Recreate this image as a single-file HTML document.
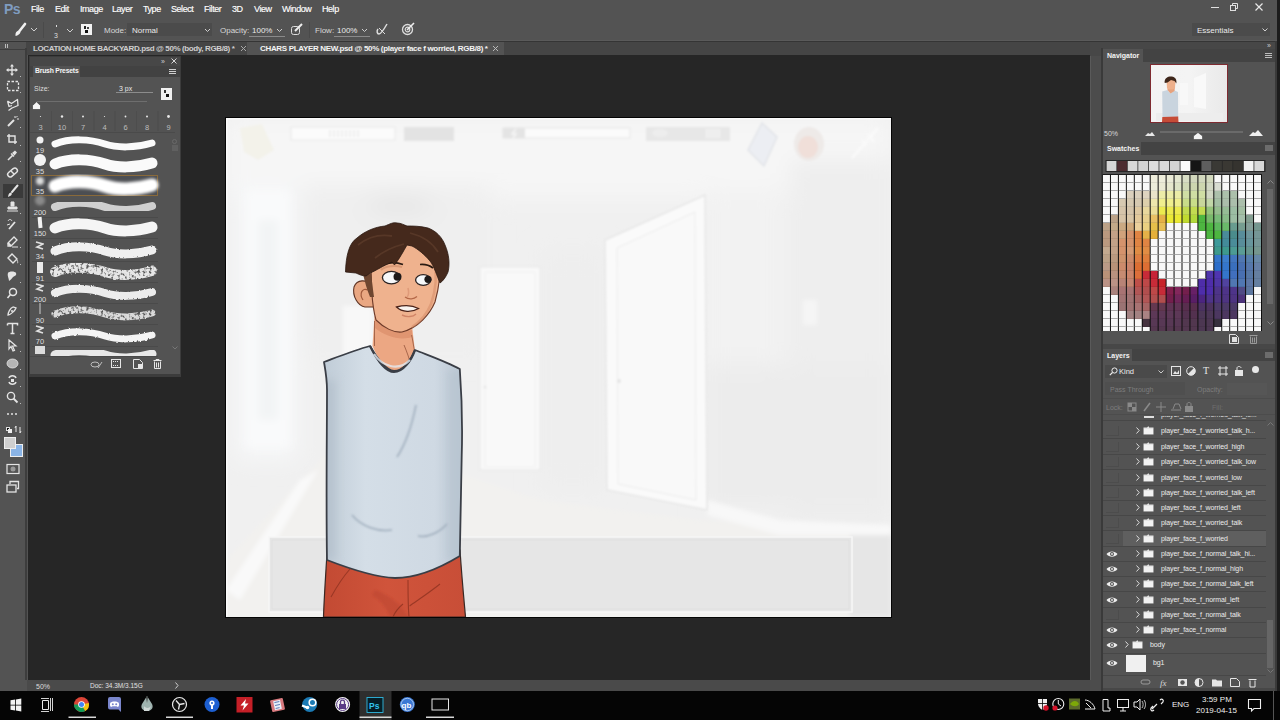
<!DOCTYPE html>
<html><head><meta charset="utf-8">
<style>
*{box-sizing:border-box}
html,body{margin:0;padding:0}
body{width:1280px;height:720px;overflow:hidden;position:relative;background:#535353;font-family:"Liberation Sans",sans-serif;color:#e6e6e6}
.a{position:absolute}
.t{position:absolute;white-space:nowrap;line-height:1}
</style></head><body>
<!-- menu bar -->
<div class="a" style="left:0;top:0;width:1280px;height:18px;background:#535353"></div>
<div class="t" style="left:4px;top:2px;font-size:14px;color:#7f9cc0;font-weight:bold;letter-spacing:-0.5px">Ps</div>
<div class="t" style="left:31px;top:5px;font-size:9px;color:#ffffff;letter-spacing:-0.45px;-webkit-text-stroke:0.15px #fff">File</div>
<div class="t" style="left:55px;top:5px;font-size:9px;color:#ffffff;letter-spacing:-0.45px;-webkit-text-stroke:0.15px #fff">Edit</div>
<div class="t" style="left:80px;top:5px;font-size:9px;color:#ffffff;letter-spacing:-0.45px;-webkit-text-stroke:0.15px #fff">Image</div>
<div class="t" style="left:112px;top:5px;font-size:9px;color:#ffffff;letter-spacing:-0.45px;-webkit-text-stroke:0.15px #fff">Layer</div>
<div class="t" style="left:143px;top:5px;font-size:9px;color:#ffffff;letter-spacing:-0.45px;-webkit-text-stroke:0.15px #fff">Type</div>
<div class="t" style="left:171px;top:5px;font-size:9px;color:#ffffff;letter-spacing:-0.45px;-webkit-text-stroke:0.15px #fff">Select</div>
<div class="t" style="left:204px;top:5px;font-size:9px;color:#ffffff;letter-spacing:-0.45px;-webkit-text-stroke:0.15px #fff">Filter</div>
<div class="t" style="left:232px;top:5px;font-size:9px;color:#ffffff;letter-spacing:-0.45px;-webkit-text-stroke:0.15px #fff">3D</div>
<div class="t" style="left:254px;top:5px;font-size:9px;color:#ffffff;letter-spacing:-0.45px;-webkit-text-stroke:0.15px #fff">View</div>
<div class="t" style="left:282px;top:5px;font-size:9px;color:#ffffff;letter-spacing:-0.45px;-webkit-text-stroke:0.15px #fff">Window</div>
<div class="t" style="left:322px;top:5px;font-size:9px;color:#ffffff;letter-spacing:-0.45px;-webkit-text-stroke:0.15px #fff">Help</div>
<!-- window controls -->
<div class="a" style="left:1211px;top:7px;width:8px;height:1px;background:#e0e0e0"></div>
<svg class="a" style="left:1229px;top:2px" width="10" height="10"><rect x="1.5" y="3.5" width="5" height="5" fill="none" stroke="#e0e0e0"/><path d="M3.5 3.5V1.5H8.5V6.5H6.5" fill="none" stroke="#e0e0e0"/></svg>
<svg class="a" style="left:1254px;top:2px" width="10" height="10"><path d="M1.5 1.5L8.5 8.5M8.5 1.5L1.5 8.5" stroke="#e8e8e8" stroke-width="1.2"/></svg>

<!-- options bar -->
<div class="a" style="left:0;top:18px;width:1280px;height:22px;background:#535353"></div>
<div class="a" style="left:0;top:40px;width:1280px;height:1px;background:#5a5a5a"></div><div class="a" style="left:0;top:41px;width:1280px;height:1px;background:#353535"></div>
<svg class="a" style="left:13px;top:22px" width="14" height="16"><path d="M12 2L6.5 9" stroke="#f0f0f0" stroke-width="2.6" stroke-linecap="round"/><path d="M5.5 8.5C3.5 9 2 11 2.5 14C5 13.5 7 12 7.5 10Z" fill="#f0f0f0"/></svg>
<svg class="a" style="left:30px;top:27px" width="8" height="5"><path d="M1 1L4 4L7 1" fill="none" stroke="#cfcfcf"/></svg>
<div class="a" style="left:43px;top:22px;width:1px;height:16px;background:#4a4a4a"></div>
<div class="a" style="left:56px;top:25px;width:1px;height:2px;background:#ddd"></div>
<div class="t" style="left:54px;top:32px;font-size:7px;color:#ddd">3</div>
<svg class="a" style="left:66px;top:28px" width="8" height="5"><path d="M1 1L4 4L7 1" fill="none" stroke="#cfcfcf"/></svg>
<div class="a" style="left:81px;top:24px;width:11px;height:11px;background:#f2f2f2"></div>
<div class="a" style="left:84px;top:26px;width:2px;height:3px;background:#222"></div>
<div class="a" style="left:87px;top:27px;width:2px;height:2px;background:#444"></div>
<div class="a" style="left:85px;top:30px;width:3px;height:3px;background:#111"></div>
<div class="t" style="left:104px;top:27px;font-size:8px;color:#d8d8d8">Mode:</div>
<div class="a" style="left:127px;top:23px;width:85px;height:13px;background:#4b4b4b"></div>
<div class="t" style="left:132px;top:27px;font-size:8px;color:#eaeaea">Normal</div>
<svg class="a" style="left:204px;top:28px" width="7" height="5"><path d="M1 1L3.5 3.5L6 1" fill="none" stroke="#cfcfcf"/></svg>
<div class="t" style="left:220px;top:27px;font-size:8px;color:#d8d8d8">Opacity:</div>
<div class="t" style="left:252px;top:27px;font-size:8px;color:#eaeaea">100%</div>
<div class="a" style="left:249px;top:36px;width:36px;height:1px;background:#8a8a8a"></div>
<svg class="a" style="left:276px;top:28px" width="7" height="5"><path d="M1 1L3.5 3.5L6 1" fill="none" stroke="#cfcfcf"/></svg>
<svg class="a" style="left:290px;top:22px" width="14" height="14"><rect x="1.5" y="4.5" width="8" height="8" rx="2" fill="none" stroke="#ddd"/><path d="M5 9L12 2" stroke="#eee" stroke-width="2"/></svg>
<div class="a" style="left:309px;top:22px;width:1px;height:16px;background:#4a4a4a"></div>
<div class="t" style="left:315px;top:27px;font-size:8px;color:#d8d8d8">Flow:</div>
<div class="t" style="left:337px;top:27px;font-size:8px;color:#eaeaea">100%</div>
<div class="a" style="left:334px;top:36px;width:36px;height:1px;background:#8a8a8a"></div>
<svg class="a" style="left:361px;top:28px" width="7" height="5"><path d="M1 1L3.5 3.5L6 1" fill="none" stroke="#cfcfcf"/></svg>
<svg class="a" style="left:375px;top:22px" width="14" height="14"><path d="M3 7C1.5 9 2 12 4 12C6 12 8 9 12 2" fill="none" stroke="#ddd" stroke-width="1.5"/><path d="M4 6L10 12" stroke="#ddd" stroke-width="1"/></svg>
<svg class="a" style="left:401px;top:22px" width="14" height="14"><circle cx="6.5" cy="7.5" r="5" fill="none" stroke="#ddd" stroke-width="1.3"/><circle cx="6.5" cy="7.5" r="2.3" fill="none" stroke="#ddd" stroke-width="1.2"/><path d="M6 8L13 1" stroke="#eee" stroke-width="1.6"/></svg>
<div class="a" style="left:1192px;top:23px;width:78px;height:13px;background:#4b4b4b"></div>
<div class="t" style="left:1197px;top:27px;font-size:8px;color:#eaeaea">Essentials</div>
<svg class="a" style="left:1262px;top:28px" width="6" height="4"><path d="M0.5 0.5L3 3L5.5 0.5" fill="none" stroke="#cfcfcf"/></svg>

<!-- tab bar -->
<div class="a" style="left:0;top:42px;width:1090px;height:13px;background:#454545"></div>
<div class="a" style="left:247px;top:42px;width:257px;height:13px;background:#535353"></div>
<svg class="a" style="left:240px;top:45px" width="7" height="7"><path d="M1 1L6 6M6 1L1 6" stroke="#a8a8a8"/></svg>
<svg class="a" style="left:492px;top:45px" width="7" height="7"><path d="M1 1L6 6M6 1L1 6" stroke="#b8b8b8"/></svg>
<div class="t" style="left:33px;top:45px;font-size:8px;color:#cfcfcf;font-weight:bold;letter-spacing:-0.38px">LOCATION HOME BACKYARD.psd @ 50% (body, RGB/8) *</div>
<div class="t" style="left:260px;top:45px;font-size:8px;color:#f4f4f4;font-weight:bold;letter-spacing:-0.33px">CHARS PLAYER NEW.psd @ 50% (player face f worried, RGB/8) *</div>

<!-- left toolbar -->
<div class="a" style="left:0;top:42px;width:26px;height:638px;background:#535353"></div>
<div class="a" style="left:25px;top:48px;width:2px;height:632px;background:#3d3d3d"></div>
<div class="a" style="left:5px;top:44px;width:1px;height:4px;background:#bbb"></div><div class="a" style="left:0;top:49px;width:25px;height:1px;background:#3e3e3e"></div>
<div class="a" style="left:7px;top:44px;width:1px;height:4px;background:#bbb"></div>
<div class="a" style="left:3px;top:184px;width:20px;height:14px;background:#3a3a3a"></div>
<svg class="a" style="left:6px;top:184px" width="14" height="14"><path d="M11.5 1.5L6 8" stroke="#e4e4e4" stroke-width="2" stroke-linecap="round"/><path d="M4.5 8.5C2.5 9 2.5 11 2 13L5 11.5C6 10.5 6 9.5 5.5 9Z" fill="#e4e4e4"/></svg>
<svg class="a" style="left:6px;top:64px" width="14" height="14"><path d="M6 1V11M1 6H11" stroke="#e4e4e4" stroke-width="1.3"/><path d="M6 0L4 2.5H8ZM6 12L4 9.5H8ZM0 6L2.5 4V8ZM12 6L9.5 4V8Z" fill="#e4e4e4"/></svg>
<div class="a" style="left:20px;top:76px;width:1px;height:1px;background:#bbb"></div>
<svg class="a" style="left:6px;top:80px" width="14" height="14"><rect x="1.5" y="1.5" width="11" height="9" fill="none" stroke="#e4e4e4" stroke-width="1.3" stroke-dasharray="2.5 1.5"/></svg>
<div class="a" style="left:20px;top:92px;width:1px;height:1px;background:#bbb"></div>
<svg class="a" style="left:6px;top:98px" width="14" height="14"><path d="M1.5 3L5.5 5.5L11.5 1.5L12 7.5L6 10L2.5 12.5M1.5 3L3 8.5L6 7.5" fill="none" stroke="#e4e4e4" stroke-width="1.3" stroke-linejoin="round"/></svg>
<div class="a" style="left:20px;top:110px;width:1px;height:1px;background:#bbb"></div>
<svg class="a" style="left:6px;top:115px" width="14" height="14"><path d="M2 11L8 5" stroke="#e4e4e4" stroke-width="2"/><path d="M9 1V3M11 4H13M10 2.5L11.5 1" stroke="#e4e4e4" stroke-width="1"/></svg>
<div class="a" style="left:20px;top:127px;width:1px;height:1px;background:#bbb"></div>
<svg class="a" style="left:6px;top:133px" width="14" height="14"><path d="M3 1V9H11M1 3H9V11" fill="none" stroke="#e4e4e4" stroke-width="1.4"/></svg>
<div class="a" style="left:20px;top:145px;width:1px;height:1px;background:#bbb"></div>
<svg class="a" style="left:6px;top:149px" width="14" height="14"><path d="M2 11L7 6" stroke="#e4e4e4" stroke-width="1.6"/><path d="M6 4L9 1.5L11 3.5L8.5 6.5Z" fill="#e4e4e4"/><path d="M5 4.5L8 7.5" stroke="#e4e4e4" stroke-width="1.3"/></svg>
<div class="a" style="left:20px;top:161px;width:1px;height:1px;background:#bbb"></div>
<svg class="a" style="left:6px;top:166px" width="14" height="14"><rect x="1" y="4" width="11" height="5" rx="2.5" transform="rotate(-40 6.5 6.5)" fill="none" stroke="#e4e4e4" stroke-width="1.5"/><path d="M5 5L8 8" stroke="#e4e4e4" stroke-width="1.4"/></svg>
<div class="a" style="left:20px;top:178px;width:1px;height:1px;background:#bbb"></div>
<svg class="a" style="left:6px;top:201px" width="14" height="14"><path d="M5 1H8V5H5Z M2 6H11V8H2Z M1 10H12" fill="#e4e4e4" stroke="#e4e4e4" stroke-width="1"/></svg>
<div class="a" style="left:20px;top:213px;width:1px;height:1px;background:#bbb"></div>
<svg class="a" style="left:6px;top:218px" width="14" height="14"><path d="M3 11L9 4" stroke="#e4e4e4" stroke-width="1.8"/><path d="M2 3C3 1 5 1 6 3M4 6L1 7" fill="none" stroke="#e4e4e4" stroke-width="1"/></svg>
<div class="a" style="left:20px;top:230px;width:1px;height:1px;background:#bbb"></div>
<svg class="a" style="left:6px;top:235px" width="14" height="14"><path d="M2 8L8 2L11 5L5 11H2Z" fill="none" stroke="#e4e4e4" stroke-width="1.3"/><path d="M2 8L5 11" stroke="#e4e4e4" stroke-width="2"/><path d="M6 12H12" stroke="#e4e4e4"/></svg>
<div class="a" style="left:20px;top:247px;width:1px;height:1px;background:#bbb"></div>
<svg class="a" style="left:6px;top:252px" width="14" height="14"><path d="M2 6L6 2L11 7L7 11Z" fill="none" stroke="#e4e4e4" stroke-width="1.4"/><path d="M11 8C12 10 12 11 11 11" stroke="#e4e4e4"/></svg>
<div class="a" style="left:20px;top:264px;width:1px;height:1px;background:#bbb"></div>
<svg class="a" style="left:6px;top:270px" width="14" height="14"><path d="M3 11C3 8 1 6 2 3C3 1 9 1 10 3C11 6 8 6 7 7C6 8 5 10 3 11Z" fill="#e4e4e4"/></svg>
<div class="a" style="left:20px;top:282px;width:1px;height:1px;background:#bbb"></div>
<svg class="a" style="left:6px;top:287px" width="14" height="14"><circle cx="7" cy="5" r="3.5" fill="none" stroke="#e4e4e4" stroke-width="1.5"/><path d="M4.5 7.5L1.5 11" stroke="#e4e4e4" stroke-width="1.6"/></svg>
<div class="a" style="left:20px;top:299px;width:1px;height:1px;background:#bbb"></div>
<svg class="a" style="left:6px;top:305px" width="14" height="14"><path d="M2 10C4 10 9 6 10 3L7 2C4 3 2 8 2 10Z" fill="none" stroke="#e4e4e4" stroke-width="1.3"/><circle cx="6" cy="6" r="1" fill="#e4e4e4"/></svg>
<div class="a" style="left:20px;top:317px;width:1px;height:1px;background:#bbb"></div>
<svg class="a" style="left:6px;top:322px" width="14" height="14"><path d="M1.5 1.5H11.5V3.5M1.5 1.5V3.5M6.5 1.5V11.5M4.5 11.5H8.5" fill="none" stroke="#e4e4e4" stroke-width="1.5"/></svg>
<div class="a" style="left:20px;top:334px;width:1px;height:1px;background:#bbb"></div>
<svg class="a" style="left:6px;top:339px" width="14" height="14"><path d="M3 1L10 7H6.5L8.5 11.5L7 12L5 7.5L3 10Z" fill="none" stroke="#e4e4e4" stroke-width="1.2"/></svg>
<div class="a" style="left:20px;top:351px;width:1px;height:1px;background:#bbb"></div>
<svg class="a" style="left:6px;top:357px" width="14" height="14"><ellipse cx="6.5" cy="6.5" rx="5.5" ry="4.5" fill="#b4b4b4" stroke="#e4e4e4" stroke-width="0.8"/></svg>
<div class="a" style="left:20px;top:369px;width:1px;height:1px;background:#bbb"></div>
<svg class="a" style="left:6px;top:374px" width="14" height="14"><path d="M3 4C4 1 9 1 10 4M10 8C9 11 4 11 3 8" fill="none" stroke="#e4e4e4" stroke-width="1.5"/><path d="M5 5H8V8H5Z" fill="#e4e4e4"/></svg>
<div class="a" style="left:20px;top:386px;width:1px;height:1px;background:#bbb"></div>
<svg class="a" style="left:6px;top:391px" width="14" height="14"><circle cx="5" cy="5" r="3.6" fill="none" stroke="#e4e4e4" stroke-width="1.4"/><path d="M7.5 7.5L11.5 11.5" stroke="#e4e4e4" stroke-width="1.8"/></svg>
<div class="a" style="left:20px;top:403px;width:1px;height:1px;background:#bbb"></div>
<svg class="a" style="left:6px;top:408px" width="14" height="14"><path d="M1 6H3M5 6H7M9 6H11" stroke="#e4e4e4" stroke-width="1.6"/></svg>
<div class="a" style="left:6px;top:427px;width:4px;height:4px;background:#111;border:1px solid #ddd"></div>
<div class="a" style="left:8px;top:429px;width:4px;height:4px;background:#eee"></div>
<svg class="a" style="left:14px;top:425px" width="9" height="9"><path d="M2 1V7M2 1L1 3M6 2V8M6 8L7 6" stroke="#e4e4e4" fill="none"/></svg>
<div class="a" style="left:10px;top:444px;width:13px;height:13px;background:#8ab4e6;border:1px solid #eee"></div>
<div class="a" style="left:4px;top:437px;width:12px;height:12px;background:#cfcfcf;border:1px solid #eee"></div>
<svg class="a" style="left:6px;top:463px" width="14" height="12"><rect x="1" y="1.5" width="12" height="9" fill="none" stroke="#e4e4e4" stroke-width="1.2"/><circle cx="7" cy="6" r="2.5" fill="#9a9a9a"/></svg>
<svg class="a" style="left:6px;top:480px" width="14" height="13"><rect x="1" y="5" width="9" height="7" fill="none" stroke="#e4e4e4" stroke-width="1.3"/><path d="M4 4V1.5H12.5V8.5H11" fill="none" stroke="#e4e4e4" stroke-width="1.3"/></svg>

<!-- canvas bg -->
<div class="a" style="left:28px;top:55px;width:1062px;height:625px;background:#262626"></div>

<!-- status bar -->
<div class="a" style="left:27px;top:680px;width:1063px;height:11px;background:#4a4a4a"></div>
<div class="t" style="left:36px;top:683px;font-size:7px;color:#dcdcdc">50%</div>
<div class="t" style="left:90px;top:683px;font-size:6.5px;color:#e0e0e0">Doc: 34.3M/3.15G</div>
<svg class="a" style="left:175px;top:682px" width="4" height="7"><path d="M0.5 0.5L3 3.5L0.5 6.5" fill="none" stroke="#cfcfcf"/></svg>

<!-- brush presets panel -->
<div class="a" style="left:29px;top:56px;width:152px;height:321px;background:#3c3c3c"></div>
<div class="a" style="left:30px;top:57px;width:150px;height:9px;background:#474747"></div>
<div class="t" style="left:161px;top:58px;font-size:7px;color:#cfcfcf">&#187;</div>
<svg class="a" style="left:171px;top:58px" width="6" height="6"><path d="M0.5 0.5L5.5 5.5M5.5 0.5L0.5 5.5" stroke="#d8d8d8"/></svg>
<div class="a" style="left:30px;top:66px;width:150px;height:11px;background:#424242"></div>
<div class="a" style="left:33px;top:66px;width:47px;height:11px;background:#535353"></div>
<div class="t" style="left:35px;top:68px;font-size:6.8px;color:#f4f4f4;font-weight:bold;letter-spacing:-0.2px">Brush Presets</div>
<div class="a" style="left:169px;top:69px;width:7px;height:1px;background:#cfcfcf;box-shadow:0 2px 0 #cfcfcf,0 4px 0 #cfcfcf"></div>
<div class="a" style="left:30px;top:77px;width:150px;height:297px;background:#535353"></div>
<div class="t" style="left:34px;top:85px;font-size:7px;color:#dcdcdc">Size:</div>
<div class="t" style="left:119px;top:85px;font-size:7px;color:#e8e8e8">3 px</div>
<div class="a" style="left:116px;top:92px;width:37px;height:1px;background:#8c8c8c"></div>
<div class="a" style="left:161px;top:88px;width:11px;height:12px;background:#f0f0f0"></div>
<div class="a" style="left:164px;top:90px;width:2px;height:3px;background:#333"></div><div class="a" style="left:166px;top:94px;width:3px;height:3px;background:#111"></div>
<div class="a" style="left:36px;top:101px;width:111px;height:1px;background:#6e6e6e"></div>
<svg class="a" style="left:32px;top:101px" width="9" height="9"><path d="M0.5 8.5V4.5L4.5 0.8L8.5 4.5V8.5Z" fill="#f6f6f6" stroke="#333" stroke-width="0.6"/></svg>
<svg class="a" style="left:30px;top:77px" width="150" height="297">
<circle cx="10.5" cy="39.5" r="0.6" fill="#e8e8e8"/>
<circle cx="32" cy="39.5" r="1.2" fill="#e8e8e8"/>
<line x1="21.5" y1="34" x2="21.5" y2="54" stroke="#4d4d4d"/>
<circle cx="53" cy="39.5" r="1.0" fill="#e8e8e8"/>
<line x1="42.5" y1="34" x2="42.5" y2="54" stroke="#4d4d4d"/>
<circle cx="74.5" cy="39.5" r="0.6" fill="#e8e8e8"/>
<line x1="64.0" y1="34" x2="64.0" y2="54" stroke="#4d4d4d"/>
<circle cx="95.5" cy="39.5" r="0.9" fill="#e8e8e8"/>
<line x1="85.0" y1="34" x2="85.0" y2="54" stroke="#4d4d4d"/>
<circle cx="117" cy="39.5" r="1.0" fill="#e8e8e8"/>
<line x1="106.5" y1="34" x2="106.5" y2="54" stroke="#4d4d4d"/>
<circle cx="138.5" cy="39.5" r="1.4" fill="#e8e8e8"/>
<line x1="128.0" y1="34" x2="128.0" y2="54" stroke="#4d4d4d"/>
<line x1="0" y1="55.5" x2="145" y2="55.5" stroke="#4a4a4a"/>
<defs><filter id="b1" x="-20%" y="-100%" width="140%" height="300%"><feGaussianBlur stdDeviation="1.8"/></filter><filter id="b2"><feGaussianBlur stdDeviation="0.7"/></filter><filter id="rough2" x="-10%" y="-60%" width="120%" height="220%"><feTurbulence type="fractalNoise" baseFrequency="0.45" numOctaves="2" seed="4" result="n"/><feDisplacementMap in="SourceGraphic" in2="n" scale="2.8"/></filter><filter id="rough" x="-10%" y="-60%" width="120%" height="220%"><feTurbulence type="fractalNoise" baseFrequency="0.5" numOctaves="2" seed="4" result="n"/><feDisplacementMap in="SourceGraphic" in2="n" scale="2.5" result="d"/><feTurbulence type="fractalNoise" baseFrequency="0.35" numOctaves="2" seed="9" result="n2"/><feColorMatrix in="n2" type="matrix" values="0 0 0 0 0  0 0 0 0 0  0 0 0 0 0  0 0 0 -4 3.0" result="m"/><feComposite in="d" in2="m" operator="in"/></filter><filter id="b3"><feGaussianBlur stdDeviation="0.4"/></filter></defs>
<path d="M0 1C15 -5 35 -4 50 1C62 5 80 5 97 0" transform="translate(25 66)" fill="none" stroke="#fafafa" stroke-width="7" stroke-linecap="round"/>
<text x="10" y="76.0" font-size="7.5" fill="#dedede" text-anchor="middle" font-family="Liberation Sans">19</text>
<circle cx="10" cy="63" r="3.5" fill="#f2f2f2"/>
<path d="M0 1C15 -5 35 -4 50 1C62 5 80 5 97 0" transform="translate(25 86)" fill="none" stroke="#fafafa" stroke-width="11" stroke-linecap="round"/>
<text x="10" y="97.0" font-size="7.5" fill="#dedede" text-anchor="middle" font-family="Liberation Sans">35</text>
<circle cx="10" cy="83" r="6" fill="#f2f2f2"/>
<rect x="1.5" y="98.5" width="126" height="20" fill="#4c4e52" stroke="#8a6a3a" stroke-width="1"/>
<path d="M0 1C15 -5 35 -4 50 1C62 5 80 5 97 0" transform="translate(25 108)" fill="none" stroke="#ffffff" stroke-width="13" stroke-linecap="round" filter="url(#b1)"/><path d="M0 1C15 -5 35 -4 50 1C62 5 80 5 97 0" transform="translate(25 108)" fill="none" stroke="#ffffff" stroke-width="7" stroke-linecap="round" filter="url(#b3)"/>
<text x="10" y="117.0" font-size="7.5" fill="#dedede" text-anchor="middle" font-family="Liberation Sans">35</text>
<circle cx="10" cy="104" r="4" fill="#dddddd" filter="url(#b1)"/>
<path d="M0 1C15 -5 35 -4 50 1C62 5 80 5 97 0" transform="translate(25 129)" fill="none" stroke="#cfcfcf" stroke-width="8" stroke-linecap="round" filter="url(#b2)"/>
<line x1="2" y1="140.5" x2="128" y2="140.5" stroke="#4a4a4a"/>
<text x="10" y="138.0" font-size="7.5" fill="#dedede" text-anchor="middle" font-family="Liberation Sans">200</text>
<ellipse cx="10" cy="123.5" rx="5" ry="5" fill="#8a8a8a" filter="url(#b1)"/>
<path d="M0 1C15 -5 35 -4 50 1C62 5 80 5 97 0" transform="translate(25 150)" fill="none" stroke="#f5f5f5" stroke-width="11" stroke-linecap="round"/>
<line x1="2" y1="161.5" x2="128" y2="161.5" stroke="#4a4a4a"/>
<text x="10" y="159.0" font-size="7.5" fill="#dedede" text-anchor="middle" font-family="Liberation Sans">150</text>
<rect x="8" y="140" width="4" height="11" fill="#f2f2f2" transform="rotate(-5 10 145)"/>
<path d="M0 1C15 -5 35 -4 50 1C62 5 80 5 97 0" transform="translate(25 173)" fill="none" stroke="#f0f0f0" stroke-width="9" stroke-linecap="round" filter="url(#rough2)"/>
<line x1="2" y1="184.5" x2="128" y2="184.5" stroke="#4a4a4a"/>
<text x="10" y="182.0" font-size="7.5" fill="#dedede" text-anchor="middle" font-family="Liberation Sans">34</text>
<path d="M6 165L13 167L7 170L13 172" fill="none" stroke="#e0e0e0" stroke-width="1.6" filter="url(#b3)"/>
<path d="M0 1C15 -5 35 -4 50 1C62 5 80 5 97 0" transform="translate(25 194)" fill="none" stroke="#e6e6e6" stroke-width="10" stroke-linecap="round" filter="url(#rough)"/>
<line x1="2" y1="205.5" x2="128" y2="205.5" stroke="#4a4a4a"/>
<text x="10" y="204.0" font-size="7.5" fill="#dedede" text-anchor="middle" font-family="Liberation Sans">91</text>
<rect x="7" y="185" width="6" height="11" fill="#eaeaea"/>
<path d="M0 1C15 -5 35 -4 50 1C62 5 80 5 97 0" transform="translate(25 215)" fill="none" stroke="#ececec" stroke-width="8" stroke-linecap="round" filter="url(#rough2)"/>
<line x1="2" y1="226.5" x2="128" y2="226.5" stroke="#4a4a4a"/>
<text x="10" y="225.0" font-size="7.5" fill="#dedede" text-anchor="middle" font-family="Liberation Sans">200</text>
<path d="M6 207L13 209L7 212L13 214" fill="none" stroke="#e0e0e0" stroke-width="1.6" filter="url(#b3)"/>
<path d="M0 1C15 -5 35 -4 50 1C62 5 80 5 97 0" transform="translate(25 236)" fill="none" stroke="#dadada" stroke-width="7" stroke-linecap="round" filter="url(#rough)"/>
<line x1="2" y1="247.5" x2="128" y2="247.5" stroke="#4a4a4a"/>
<text x="10" y="246.0" font-size="7.5" fill="#dedede" text-anchor="middle" font-family="Liberation Sans">90</text>
<line x1="10" y1="226" x2="10" y2="237" stroke="#cfcfcf"/>
<path d="M0 1C15 -5 35 -4 50 1C62 5 80 5 97 0" transform="translate(25 258)" fill="none" stroke="#f4f4f4" stroke-width="7" stroke-linecap="round" filter="url(#rough2)"/>
<line x1="2" y1="269.5" x2="128" y2="269.5" stroke="#4a4a4a"/>
<text x="10" y="267.0" font-size="7.5" fill="#dedede" text-anchor="middle" font-family="Liberation Sans">70</text>
<path d="M6 249L13 251L7 254L13 256" fill="none" stroke="#e0e0e0" stroke-width="1.6" filter="url(#b3)"/>
<path d="M0 1C15 -5 35 -4 50 1C62 5 80 5 97 0" transform="translate(25 277)" fill="none" stroke="#e8e8e8" stroke-width="9" stroke-linecap="round" filter="url(#b2)"/>
<rect x="5" y="269" width="10" height="8" fill="#dcdcdc"/>
<rect x="0" y="279" width="150" height="1" fill="#535353"/>
</svg>
<svg class="a" style="left:30px;top:121px" width="150" height="12"><text x="10.5" y="9" font-size="7.5" fill="#bdbdbd" text-anchor="middle" font-family="Liberation Sans">3</text><text x="32" y="9" font-size="7.5" fill="#bdbdbd" text-anchor="middle" font-family="Liberation Sans">10</text><text x="53" y="9" font-size="7.5" fill="#bdbdbd" text-anchor="middle" font-family="Liberation Sans">7</text><text x="74.5" y="9" font-size="7.5" fill="#bdbdbd" text-anchor="middle" font-family="Liberation Sans">4</text><text x="95.5" y="9" font-size="7.5" fill="#bdbdbd" text-anchor="middle" font-family="Liberation Sans">6</text><text x="117" y="9" font-size="7.5" fill="#bdbdbd" text-anchor="middle" font-family="Liberation Sans">8</text><text x="138.5" y="9" font-size="7.5" fill="#bdbdbd" text-anchor="middle" font-family="Liberation Sans">9</text></svg>
<div class="a" style="left:30px;top:357px;width:150px;height:17px;background:#535353"></div>
<div class="a" style="left:30px;top:356px;width:128px;height:1px;background:#4a4a4a"></div>
<div class="a" style="left:172px;top:139px;width:5px;height:5px;border-radius:50%;border:1px solid #6a6a6a"></div>
<div class="a" style="left:172px;top:145px;width:6px;height:6px;background:#606060"></div>
<svg class="a" style="left:172px;top:346px" width="6" height="4"><path d="M0.5 0.5L3 3L5.5 0.5" fill="none" stroke="#777"/></svg>
<svg class="a" style="left:90px;top:360px" width="13" height="9"><ellipse cx="5" cy="4.5" rx="4" ry="2.5" fill="none" stroke="#bdbdbd"/><path d="M8 8L12 2" stroke="#bdbdbd"/></svg>
<svg class="a" style="left:111px;top:359px" width="10" height="10"><rect x="0.5" y="0.5" width="9" height="8" fill="none" stroke="#e6e6e6"/><path d="M2 2.5H8M2 6.5H8" stroke="#e6e6e6" stroke-dasharray="1 1"/></svg>
<svg class="a" style="left:133px;top:359px" width="10" height="10"><path d="M0.5 0.5H6.5L9.5 3.5V9.5H0.5Z" fill="none" stroke="#e6e6e6"/><rect x="5" y="5" width="4" height="4" fill="#e6e6e6"/></svg>
<svg class="a" style="left:153px;top:359px" width="9" height="10"><path d="M0.5 1.5H8.5M3 1.5V0.5H6V1.5M1.5 2.5V9.5H7.5V2.5M3.5 3.5V8.5M5.5 3.5V8.5" fill="none" stroke="#e6e6e6"/></svg>

<!-- document -->
<div class="a" style="left:225px;top:117px;width:667px;height:501px;background:#050505"></div>
<svg class="a" style="left:226px;top:118px" width="665" height="499" viewBox="226 118 665 499">
<defs>
<filter id="bl8" x="-50%" y="-50%" width="200%" height="200%"><feGaussianBlur stdDeviation="11"/></filter>
<filter id="bl4" x="-50%" y="-50%" width="200%" height="200%"><feGaussianBlur stdDeviation="4"/></filter>
<filter id="bl2" x="-50%" y="-50%" width="200%" height="200%"><feGaussianBlur stdDeviation="2"/></filter>
<filter id="bl1" x="-20%" y="-20%" width="140%" height="140%"><feGaussianBlur stdDeviation="1"/></filter>
<linearGradient id="shirtg" x1="0" x2="1"><stop offset="0" stop-color="#c0ccd7"/><stop offset="0.3" stop-color="#d4dee7"/><stop offset="0.8" stop-color="#cfd9e3"/><stop offset="1" stop-color="#bcc8d4"/></linearGradient>
<linearGradient id="pantg" x1="0" x2="1"><stop offset="0" stop-color="#c24a33"/><stop offset="0.45" stop-color="#d0543b"/><stop offset="1" stop-color="#c84e37"/></linearGradient>
</defs>
<rect x="226" y="118" width="665" height="499" fill="#f0f0f0"/>
<!-- background hallway -->
<g filter="url(#bl8)">
<rect x="226" y="118" width="665" height="80" fill="#f6f6f6"/>
<rect x="300" y="185" width="190" height="170" fill="#efefef"/>
<ellipse cx="400" cy="205" rx="35" ry="8" fill="#e4e4e4"/>
<rect x="704" y="190" width="80" height="330" fill="#f2f2f2"/>
<rect x="790" y="160" width="101" height="370" fill="#eeeeee"/>
<rect x="705" y="365" width="186" height="145" fill="#ececec"/>
<rect x="540" y="250" width="66" height="240" fill="#eeeeee"/>
<rect x="236" y="180" width="62" height="280" fill="#f6f7f8"/>
</g><g filter="url(#bl4)"><rect x="246" y="190" width="44" height="258" fill="#f9fafb"/><rect x="258" y="220" width="20" height="200" fill="#f2f4f5"/>
</g>
<g filter="url(#bl2)">
<rect x="343" y="306" width="30" height="60" fill="#f8f8f8"/>
<rect x="803" y="300" width="14" height="25" fill="#f5f5f5"/>
<path d="M226 617L226 560L330 450L360 440L540 500L700 520L891 530L891 617Z" fill="#f2f1ef"/>
<path d="M226 590L300 480L318 470L240 600Z" fill="#f9f9f9"/>
<path d="M707 500L780 520L891 525L891 535L780 535L707 515Z" fill="#f8f8f8"/>
<rect x="850" y="535" width="41" height="82" fill="#e6e6e6"/>
</g>
<g filter="url(#bl1)">
<rect x="480" y="267" width="60" height="203" fill="#f9f9f9" stroke="#e9e9e9" stroke-width="1.2"/>
<rect x="485" y="272" width="50" height="195" fill="none" stroke="#f0f0f0" stroke-width="1"/>
<path d="M605 240L705 195L707 510L607 490Z" fill="#fafafa" stroke="#e6e6e6" stroke-width="1.4"/>
<path d="M617 248L695 212L696 500L618 484Z" fill="#f9f9f9" stroke="#ececec" stroke-width="1"/>
<circle cx="619" cy="381" r="2" fill="#e4e4e4"/>
<circle cx="485" cy="387" r="1.5" fill="#e6e6e6"/>
</g>
<!-- dialog box -->
<rect x="269" y="537" width="583" height="75" fill="#e6e6e6" stroke="#f6f6f6" stroke-width="1.5"/><rect x="272" y="540" width="577" height="69" fill="none" stroke="#dedede" stroke-width="0.8"/>
<rect x="226" y="118" width="665" height="1.5" fill="#fbfbfb"/><rect x="226" y="118" width="1.5" height="499" fill="#fbfbfb"/>
<!-- HUD -->
<g filter="url(#bl1)">
<path d="M240 128L262 124L274 150L258 160L244 152Z" fill="#f3f2ea"/>
<rect x="291" y="127" width="104" height="13" fill="#fbfbfb" stroke="#e8e8e8"/>
<path d="M330 130V137M334 130V137M338 130V137M342 130V137M346 130V137M350 130V137M354 130V137M358 130V137" stroke="#e2e2e2" stroke-width="1"/>
<rect x="404" y="127" width="50" height="14" fill="#e3e3e3"/>
<rect x="503" y="128" width="127" height="10" fill="#fbfbfb" stroke="#e6e6e6"/>
<rect x="503" y="128" width="22" height="10" fill="#e4e4e4"/>
<path d="M516 129L512 134H516L513 138" stroke="#f6f6f6" stroke-width="1.5" fill="none"/>
<rect x="646" y="127" width="84" height="14" fill="#e7e7e7"/>
<ellipse cx="660" cy="133" rx="8" ry="4" fill="#ededed"/>
<path d="M707 129V138M710 129V138M713 129V138M716 129V138M719 129V138" stroke="#fafafa" stroke-width="1.2"/>
<path d="M748 150L762 123L777 137L764 166Z" fill="#eceef3" stroke="#e2e4e8" stroke-width="1.5"/>
<ellipse cx="809" cy="144" rx="15" ry="17" fill="#eeeae8"/>
<ellipse cx="808" cy="147" rx="10" ry="11" fill="#f0dfd9"/>
<path d="M852 158L878 128M868 134L874 142M862 140L866 146" stroke="#fafafa" stroke-width="2.5"/>
</g>
<!-- character -->
<g id="char">
<!-- pants -->
<path d="M327 553L460 550C462 580 464 600 465.5 617L323.5 617C324 600 325.5 578 327 553Z" fill="url(#pantg)" stroke="#3a2824" stroke-width="1.2"/>
<g filter="url(#bl1)">
<path d="M375 590C390 595 402 605 408 617L390 617C386 607 380 600 372 595Z" fill="#b3402c" opacity="0.35"/>

</g>
<path d="M350 569C342 578 336 588 331 597M408 580C408 595 408 606 409 617M440 584C430 592 418 600 409.6 606M403 604C398 608 395 612 393 617" stroke="#8e3220" stroke-width="1.1" fill="none" opacity="0.8"/>
<!-- neck -->
<path d="M374.5 316L412 326L415 351C411 362 403 371 396 371C386 370 378 360 372.5 346Z" fill="#eca783"/>
<path d="M375 320C385 330 398 335 412 330L412 337C400 341 385 336 375 328Z" fill="#d88966" opacity="0.6"/>
<path d="M404 345C407 352 409 358 411 365M374.5 321L374.5 346M411.7 335L414.5 351" stroke="#8a4a32" stroke-width="1" fill="none" opacity="0.7"/>
<!-- shirt -->
<path d="M324 362C340 356 355 350 370 346C378 360 386 370 394 371C403 371 411 360 415 350C430 356 447 362 459.8 369C462 400 462.5 430 461.7 456C461 500 460 530 459.8 556C440 568 418 578 395 578C372 577 345 567 327 560C326 500 327 430 327 390C327 378 325 368 324 362Z" fill="url(#shirtg)"/>
<clipPath id="shclip"><path d="M324 362C340 356 355 350 370 346C378 360 386 370 394 371C403 371 411 360 415 350C430 356 447 362 459.8 369C462 400 462.5 430 461.7 456C461 500 460 530 459.8 556C440 568 418 578 395 578C372 577 345 567 327 560C326 500 327 430 327 390C327 378 325 368 324 362Z"/></clipPath>
<g clip-path="url(#shclip)">
<g filter="url(#bl4)">
<rect x="318" y="380" width="18" height="180" fill="#b4c0cc" opacity="0.8"/>
<rect x="448" y="370" width="20" height="190" fill="#b8c4d0" opacity="0.8"/>


</g>
</g>
<path d="M324 362C340 356 355 350 370 346C378 360 386 370 394 371C403 371 411 360 415 350C430 356 447 362 459.8 369C462 400 462.5 430 461.7 456C461 500 460 530 459.8 556C440 568 418 578 395 578C372 577 345 567 327 560C326 500 327 430 327 390C327 378 325 368 324 362Z" fill="none" stroke="#3a3e46" stroke-width="1.8" stroke-linejoin="round"/>
<path d="M370 346C378 362 386 372 394 372C403 372 411 361 415 350" stroke="#3a3e46" stroke-width="2.2" fill="none"/>
<path d="M374 354C382 366 398 372 410 360" stroke="#e4eaf0" stroke-width="2.2" fill="none" opacity="0.8"/>
<path d="M416 405C412 425 405 445 397 457M352 515C362 527 378 532 392 530M418 536C428 538 440 532 447 524" stroke="#9fadbc" stroke-width="1.5" fill="none" filter="url(#bl1)"/>
<!-- ear -->
<path d="M374 286C366 279 357 279 354 287C352 296 358 306 365 307L374 307Z" fill="#e9a782" stroke="#5e3424" stroke-width="1.1"/>
<path d="M368 290C362 287 359 294 363 300" stroke="#a05a3c" stroke-width="1.2" fill="none"/>
<!-- face -->
<path d="M372 255C370 280 372 306 376 320C384 328 394 333 402 332C418 328 430 314 435 302C439 288 441 272 440 255C425 242 390 240 372 255Z" fill="#efb28e" stroke="#6e3a28" stroke-width="1.1"/>
<path d="M434 260C437 274 436 290 431 304C427 314 420 322 412 327" stroke="#d68c68" stroke-width="2.5" fill="none" opacity="0.55"/>

<!-- eyes -->
<path d="M381 270C385 266 395 265 402 267" stroke="#c98866" stroke-width="2" fill="none" opacity="0.6"/>
<ellipse cx="391.4" cy="277.6" rx="9" ry="6.2" fill="#f6f8fa" stroke="#2a2222" stroke-width="1.3"/>
<circle cx="397.5" cy="276.8" r="4" fill="#1e1a1a"/>
<ellipse cx="423.2" cy="280" rx="7.6" ry="5.3" fill="#f6f8fa" stroke="#2a2222" stroke-width="1.3"/>
<circle cx="428" cy="279.3" r="3.6" fill="#1e1a1a"/>
<path d="M381 266C388 262 396 262 403 264.5M420 264.5C425 264 429 265 433 268" stroke="#2a1a12" stroke-width="1.7" fill="none"/>
<!-- nose & mouth -->
<path d="M405 297C409 300 414 299 417 296.5" stroke="#b46848" stroke-width="1.2" fill="none"/>
<path d="M408 288C409 292 409 295 407 297" stroke="#d89070" stroke-width="1.5" fill="none" opacity="0.7"/>
<path d="M396.5 307C404 305 412 305 418.6 308.5C412 312.5 402 312.5 396.5 307Z" fill="#f8f4f0" stroke="#4a2218" stroke-width="1.3"/>
<path d="M402 315C407 317.5 413 317 416 314" stroke="#d08466" stroke-width="1.4" fill="none"/>
<!-- hair -->
<path d="M363 274L371 273C372 282 373 290 374 297L370 297C367 290 365 282 363 274Z" fill="#6e4630"/>
<path d="M345.5 272C346 256 349 243 357 238C365 231 375 227 385 226C390 224 393 222 397 223C401 223 404 225 407 226C413 226 420 226 428 228C436 231 442 237 445 245C449 254 450 264 448 272C446 277 443 281 440 283C437 276 434 266 430 261C425 255 418 249 412 246L407 245C404 250 400 258 394.5 265L392 262C388 264 383 266 380 268C376 270 373 272 370 273L366 276C363 276 360 275 356 273Z" fill="#45291c" stroke="#2a1810" stroke-width="0.8"/>
<path d="M358 245C368 237 380 234 392 236M410 233C422 236 432 242 438 252M375 258C385 250 396 246 404 244" stroke="#6a4632" stroke-width="1.8" fill="none" opacity="0.5"/>
</g>
</svg>

<!-- right dock -->
<div class="a" style="left:1090px;top:42px;width:190px;height:649px;background:#474747"></div>
<div class="a" style="left:1090px;top:56px;width:11px;height:635px;background:#4c4c4c"></div><div class="a" style="left:1090px;top:56px;width:1px;height:624px;background:#5a5a5a"></div>
<div class="a" style="left:1101px;top:48px;width:2px;height:643px;background:#3a3a3a"></div>
<div class="a" style="left:1275px;top:41px;width:5px;height:650px;background:#3a3a3a"></div>
<div class="t" style="left:1267px;top:42px;font-size:7px;color:#cfcfcf">&#187;</div>
<div class="a" style="left:1103px;top:49px;width:172px;height:13px;background:#434343"></div>
<div class="a" style="left:1103px;top:49px;width:40px;height:13px;background:#535353"></div>
<div class="t" style="left:1107px;top:52px;font-size:7px;color:#f4f4f4;font-weight:bold">Navigator</div>
<div class="a" style="left:1265px;top:53px;width:7px;height:1px;background:#bdbdbd;box-shadow:0 2px 0 #bdbdbd,0 4px 0 #bdbdbd"></div>
<div class="a" style="left:1103px;top:62px;width:172px;height:80px;background:#535353"></div>
<div class="a" style="left:1150px;top:64px;width:78px;height:59px;background:#7e2a30"></div>
<svg class="a" style="left:1151px;top:65px" width="76" height="57"><defs><linearGradient id="ng" x1="0" x2="1"><stop offset="0" stop-color="#f3f3f3"/><stop offset="0.5" stop-color="#f4f4f4"/><stop offset="1" stop-color="#e9e9e9"/></linearGradient></defs>
<rect width="76" height="57" fill="url(#ng)"/>
<path d="M43 13L55 8V44L43 42Z" fill="#f9f9f9"/>
<rect x="29" y="18" width="8" height="22" fill="#f8f8f8"/>
<rect x="5" y="48" width="67" height="8" fill="#ededed"/>
<path d="M11.2 26.5L16.5 25L19.5 28.5L22.5 25L27 27L27.2 52L19 54L11.5 52Z" fill="#c9d4de"/>
<path d="M11.3 52L27.2 51.5L27.5 57L11 57Z" fill="#c64c37"/>
<path d="M16.5 20L24 21L23.5 26L19.5 28.5L16.5 25Z" fill="#e7a27d"/>
<path d="M15.5 15C15.5 12 24.5 12 24.5 16L24 23C22 25 18 25 16 23Z" fill="#eeb08c"/>
<path d="M13.7 18C13 13 17 11.5 19.5 11.5C23 11.5 26 13 25.4 18.5L23.5 16L20 15L16.5 17.5Z" fill="#3e261a"/>
</svg>
<div class="t" style="left:1104px;top:130px;font-size:7px;color:#d8d8d8">50%</div>
<svg class="a" style="left:1145px;top:131px" width="10" height="6"><path d="M0 5L3 2L5 3L7 1L10 5Z" fill="#e8e8e8"/></svg>
<div class="a" style="left:1160px;top:131px;width:83px;height:2px;background:#6a6a6a"></div>
<svg class="a" style="left:1193px;top:132px" width="10" height="8"><path d="M0.5 7.5V4L5 0.5L9.5 4V7.5Z" fill="#f4f4f4" stroke="#333" stroke-width="0.5"/></svg>
<svg class="a" style="left:1249px;top:129px" width="14" height="8"><path d="M0 7L4 3L6 4L9 1L14 7Z" fill="#eeeeee"/></svg>
<div class="a" style="left:1103px;top:142px;width:172px;height:13px;background:#434343"></div>
<div class="a" style="left:1103px;top:142px;width:38px;height:13px;background:#535353"></div>
<div class="t" style="left:1107px;top:145px;font-size:7px;color:#f4f4f4;font-weight:bold">Swatches</div>
<div class="a" style="left:1265px;top:145px;width:8px;height:6px;background:#6c6c6c"></div>
<div class="a" style="left:1103px;top:155px;width:172px;height:189px;background:#535353"></div>
<svg class="a" style="left:1100px;top:158px" width="175" height="180"><rect x="5.5" y="2" width="160" height="12" fill="#262626"/>
<rect x="6.60" y="3" width="9.8" height="10" fill="#d6d6d6"/>
<rect x="17.15" y="3" width="9.8" height="10" fill="#4c2c30"/>
<rect x="27.70" y="3" width="9.8" height="10" fill="#d8d8d8"/>
<rect x="38.25" y="3" width="9.8" height="10" fill="#d4d4d4"/>
<rect x="48.80" y="3" width="9.8" height="10" fill="#dcdcdc"/>
<rect x="59.35" y="3" width="9.8" height="10" fill="#d8d8d8"/>
<rect x="69.90" y="3" width="9.8" height="10" fill="#d2d2d2"/>
<rect x="80.45" y="3" width="9.8" height="10" fill="#fafafa"/>
<rect x="91.00" y="3" width="9.8" height="10" fill="#151515"/>
<rect x="101.55" y="3" width="9.8" height="10" fill="#5e5e5e"/>
<rect x="112.10" y="3" width="9.8" height="10" fill="#3a3935"/>
<rect x="122.65" y="3" width="9.8" height="10" fill="#3a3833"/>
<rect x="133.20" y="3" width="9.8" height="10" fill="#35332f"/>
<rect x="143.75" y="3" width="9.8" height="10" fill="#f2f2f2"/>
<rect x="154.30" y="3" width="9.8" height="10" fill="#d8d8d8"/>
<defs><clipPath id="swclip"><rect x="0" y="16" width="175" height="157"/></clipPath></defs><g clip-path="url(#swclip)"><rect x="2.5" y="16.2" width="159.5" height="160.0" fill="#0e0e0e"/><rect x="3.00" y="17.00" width="6.95" height="8.00" fill="#f8f8f8"/><rect x="10.95" y="17.00" width="6.95" height="8.00" fill="#f8f8f8"/><rect x="18.90" y="17.00" width="6.95" height="8.00" fill="#f8f8f8"/><rect x="26.85" y="17.00" width="6.95" height="8.00" fill="#f8f8f8"/><rect x="34.80" y="17.00" width="6.95" height="8.00" fill="#f8f8f8"/><rect x="42.75" y="17.00" width="6.95" height="8.00" fill="#f8f8f8"/><rect x="50.70" y="17.00" width="6.95" height="8.00" fill="#eeeddb"/><rect x="58.65" y="17.00" width="6.95" height="8.00" fill="#eeeddb"/><rect x="66.60" y="17.00" width="6.95" height="8.00" fill="#eaead6"/><rect x="74.55" y="17.00" width="6.95" height="8.00" fill="#e4e7d0"/><rect x="82.50" y="17.00" width="6.95" height="8.00" fill="#d8dec5"/><rect x="90.45" y="17.00" width="6.95" height="8.00" fill="#d2d8bd"/><rect x="98.40" y="17.00" width="6.95" height="8.00" fill="#d2d8bd"/><rect x="106.35" y="17.00" width="6.95" height="8.00" fill="#d2d8bd"/><rect x="114.30" y="17.00" width="6.95" height="8.00" fill="#f8f8f8"/><rect x="122.25" y="17.00" width="6.95" height="8.00" fill="#f8f8f8"/><rect x="130.20" y="17.00" width="6.95" height="8.00" fill="#f8f8f8"/><rect x="138.15" y="17.00" width="6.95" height="8.00" fill="#f8f8f8"/><rect x="146.10" y="17.00" width="6.95" height="8.00" fill="#f8f8f8"/><rect x="154.05" y="17.00" width="6.95" height="8.00" fill="#f8f8f8"/><rect x="3.00" y="25.00" width="6.95" height="8.00" fill="#f8f8f8"/><rect x="10.95" y="25.00" width="6.95" height="8.00" fill="#f8f8f8"/><rect x="18.90" y="25.00" width="6.95" height="8.00" fill="#f8f8f8"/><rect x="26.85" y="25.00" width="6.95" height="8.00" fill="#f8f8f8"/><rect x="34.80" y="25.00" width="6.95" height="8.00" fill="#f8f8f8"/><rect x="42.75" y="25.00" width="6.95" height="8.00" fill="#f8f8f8"/><rect x="50.70" y="25.00" width="6.95" height="8.00" fill="#ededda"/><rect x="58.65" y="25.00" width="6.95" height="8.00" fill="#ebead4"/><rect x="66.60" y="25.00" width="6.95" height="8.00" fill="#e6e7cd"/><rect x="74.55" y="25.00" width="6.95" height="8.00" fill="#dde3c5"/><rect x="82.50" y="25.00" width="6.95" height="8.00" fill="#d0d9b6"/><rect x="90.45" y="25.00" width="6.95" height="8.00" fill="#cdd6af"/><rect x="98.40" y="25.00" width="6.95" height="8.00" fill="#cdd6af"/><rect x="106.35" y="25.00" width="6.95" height="8.00" fill="#d1d7c3"/><rect x="114.30" y="25.00" width="6.95" height="8.00" fill="#d8dcd2"/><rect x="122.25" y="25.00" width="6.95" height="8.00" fill="#f8f8f8"/><rect x="130.20" y="25.00" width="6.95" height="8.00" fill="#f8f8f8"/><rect x="138.15" y="25.00" width="6.95" height="8.00" fill="#f8f8f8"/><rect x="146.10" y="25.00" width="6.95" height="8.00" fill="#f8f8f8"/><rect x="154.05" y="25.00" width="6.95" height="8.00" fill="#f8f8f8"/><rect x="3.00" y="33.00" width="6.95" height="8.00" fill="#f8f8f8"/><rect x="10.95" y="33.00" width="6.95" height="8.00" fill="#f8f8f8"/><rect x="18.90" y="33.00" width="6.95" height="8.00" fill="#f8f8f8"/><rect x="26.85" y="33.00" width="6.95" height="8.00" fill="#dbd0bd"/><rect x="34.80" y="33.00" width="6.95" height="8.00" fill="#dbd0bd"/><rect x="42.75" y="33.00" width="6.95" height="8.00" fill="#ded4c0"/><rect x="50.70" y="33.00" width="6.95" height="8.00" fill="#e9e4c9"/><rect x="58.65" y="33.00" width="6.95" height="8.00" fill="#ececa7"/><rect x="66.60" y="33.00" width="6.95" height="8.00" fill="#ececa7"/><rect x="74.55" y="33.00" width="6.95" height="8.00" fill="#ececa7"/><rect x="82.50" y="33.00" width="6.95" height="8.00" fill="#d0dea4"/><rect x="90.45" y="33.00" width="6.95" height="8.00" fill="#d0dea4"/><rect x="98.40" y="33.00" width="6.95" height="8.00" fill="#d0dea4"/><rect x="106.35" y="33.00" width="6.95" height="8.00" fill="#d1d7c3"/><rect x="114.30" y="33.00" width="6.95" height="8.00" fill="#acc0ab"/><rect x="122.25" y="33.00" width="6.95" height="8.00" fill="#acc0ab"/><rect x="130.20" y="33.00" width="6.95" height="8.00" fill="#acc0ab"/><rect x="138.15" y="33.00" width="6.95" height="8.00" fill="#f8f8f8"/><rect x="146.10" y="33.00" width="6.95" height="8.00" fill="#f8f8f8"/><rect x="154.05" y="33.00" width="6.95" height="8.00" fill="#f8f8f8"/><rect x="3.00" y="41.00" width="6.95" height="8.00" fill="#f8f8f8"/><rect x="10.95" y="41.00" width="6.95" height="8.00" fill="#f8f8f8"/><rect x="18.90" y="41.00" width="6.95" height="8.00" fill="#d6c9b1"/><rect x="26.85" y="41.00" width="6.95" height="8.00" fill="#d6c9b1"/><rect x="34.80" y="41.00" width="6.95" height="8.00" fill="#d6c9b1"/><rect x="42.75" y="41.00" width="6.95" height="8.00" fill="#ddd0ac"/><rect x="50.70" y="41.00" width="6.95" height="8.00" fill="#eee7ac"/><rect x="58.65" y="41.00" width="6.95" height="8.00" fill="#f0ee8d"/><rect x="66.60" y="41.00" width="6.95" height="8.00" fill="#f0ee8d"/><rect x="74.55" y="41.00" width="6.95" height="8.00" fill="#f0ee8d"/><rect x="82.50" y="41.00" width="6.95" height="8.00" fill="#c9dd89"/><rect x="90.45" y="41.00" width="6.95" height="8.00" fill="#c9dd89"/><rect x="98.40" y="41.00" width="6.95" height="8.00" fill="#c9d69b"/><rect x="106.35" y="41.00" width="6.95" height="8.00" fill="#c2d6a8"/><rect x="114.30" y="41.00" width="6.95" height="8.00" fill="#a3bea3"/><rect x="122.25" y="41.00" width="6.95" height="8.00" fill="#abbeab"/><rect x="130.20" y="41.00" width="6.95" height="8.00" fill="#abbeab"/><rect x="138.15" y="41.00" width="6.95" height="8.00" fill="#abbeab"/><rect x="146.10" y="41.00" width="6.95" height="8.00" fill="#f8f8f8"/><rect x="154.05" y="41.00" width="6.95" height="8.00" fill="#f8f8f8"/><rect x="3.00" y="49.00" width="6.95" height="8.00" fill="#f8f8f8"/><rect x="10.95" y="49.00" width="6.95" height="8.00" fill="#f8f8f8"/><rect x="18.90" y="49.00" width="6.95" height="8.00" fill="#d5c4aa"/><rect x="26.85" y="49.00" width="6.95" height="8.00" fill="#d5c4aa"/><rect x="34.80" y="49.00" width="6.95" height="8.00" fill="#dec8a1"/><rect x="42.75" y="49.00" width="6.95" height="8.00" fill="#e8d89d"/><rect x="50.70" y="49.00" width="6.95" height="8.00" fill="#ebdf99"/><rect x="58.65" y="49.00" width="6.95" height="8.00" fill="#ecea4e"/><rect x="66.60" y="49.00" width="6.95" height="8.00" fill="#ecea4e"/><rect x="74.55" y="49.00" width="6.95" height="8.00" fill="#ecea4e"/><rect x="82.50" y="49.00" width="6.95" height="8.00" fill="#c2db51"/><rect x="90.45" y="49.00" width="6.95" height="8.00" fill="#c2db51"/><rect x="98.40" y="49.00" width="6.95" height="8.00" fill="#c2db51"/><rect x="106.35" y="49.00" width="6.95" height="8.00" fill="#95c37b"/><rect x="114.30" y="49.00" width="6.95" height="8.00" fill="#95bc8e"/><rect x="122.25" y="49.00" width="6.95" height="8.00" fill="#95bc95"/><rect x="130.20" y="49.00" width="6.95" height="8.00" fill="#9cbda3"/><rect x="138.15" y="49.00" width="6.95" height="8.00" fill="#a3bea3"/><rect x="146.10" y="49.00" width="6.95" height="8.00" fill="#f8f8f8"/><rect x="154.05" y="49.00" width="6.95" height="8.00" fill="#f8f8f8"/><rect x="3.00" y="57.00" width="6.95" height="8.00" fill="#f8f8f8"/><rect x="10.95" y="57.00" width="6.95" height="8.00" fill="#baa187"/><rect x="18.90" y="57.00" width="6.95" height="8.00" fill="#d6c3a7"/><rect x="26.85" y="57.00" width="6.95" height="8.00" fill="#d9c6a7"/><rect x="34.80" y="57.00" width="6.95" height="8.00" fill="#e3c99b"/><rect x="42.75" y="57.00" width="6.95" height="8.00" fill="#e7d08e"/><rect x="50.70" y="57.00" width="6.95" height="8.00" fill="#e8c064"/><rect x="58.65" y="57.00" width="6.95" height="8.00" fill="#e5b148"/><rect x="66.60" y="57.00" width="6.95" height="8.00" fill="#ebea34"/><rect x="74.55" y="57.00" width="6.95" height="8.00" fill="#ebea34"/><rect x="82.50" y="57.00" width="6.95" height="8.00" fill="#c0da2f"/><rect x="90.45" y="57.00" width="6.95" height="8.00" fill="#b2d93c"/><rect x="98.40" y="57.00" width="6.95" height="8.00" fill="#4db640"/><rect x="106.35" y="57.00" width="6.95" height="8.00" fill="#78ba6b"/><rect x="114.30" y="57.00" width="6.95" height="8.00" fill="#78ba78"/><rect x="122.25" y="57.00" width="6.95" height="8.00" fill="#87bb87"/><rect x="130.20" y="57.00" width="6.95" height="8.00" fill="#9cbda3"/><rect x="138.15" y="57.00" width="6.95" height="8.00" fill="#a4beaa"/><rect x="146.10" y="57.00" width="6.95" height="8.00" fill="#849e91"/><rect x="154.05" y="57.00" width="6.95" height="8.00" fill="#f8f8f8"/><rect x="3.00" y="65.00" width="6.95" height="8.00" fill="#bba187"/><rect x="10.95" y="65.00" width="6.95" height="8.00" fill="#c3a988"/><rect x="18.90" y="65.00" width="6.95" height="8.00" fill="#caa982"/><rect x="26.85" y="65.00" width="6.95" height="8.00" fill="#d1a97c"/><rect x="34.80" y="65.00" width="6.95" height="8.00" fill="#ebd09c"/><rect x="42.75" y="65.00" width="6.95" height="8.00" fill="#ead081"/><rect x="50.70" y="65.00" width="6.95" height="8.00" fill="#e7c04a"/><rect x="58.65" y="65.00" width="6.95" height="8.00" fill="#e7c057"/><rect x="66.60" y="65.00" width="6.95" height="8.00" fill="#f8f8f8"/><rect x="74.55" y="65.00" width="6.95" height="8.00" fill="#f8f8f8"/><rect x="82.50" y="65.00" width="6.95" height="8.00" fill="#f8f8f8"/><rect x="90.45" y="65.00" width="6.95" height="8.00" fill="#f8f8f8"/><rect x="98.40" y="65.00" width="6.95" height="8.00" fill="#4db640"/><rect x="106.35" y="65.00" width="6.95" height="8.00" fill="#4db640"/><rect x="114.30" y="65.00" width="6.95" height="8.00" fill="#5cb85c"/><rect x="122.25" y="65.00" width="6.95" height="8.00" fill="#6ab96a"/><rect x="130.20" y="65.00" width="6.95" height="8.00" fill="#689c8f"/><rect x="138.15" y="65.00" width="6.95" height="8.00" fill="#769d90"/><rect x="146.10" y="65.00" width="6.95" height="8.00" fill="#849e98"/><rect x="154.05" y="65.00" width="6.95" height="8.00" fill="#75968f"/><rect x="3.00" y="73.00" width="6.95" height="8.00" fill="#ba997f"/><rect x="10.95" y="73.00" width="6.95" height="8.00" fill="#c2a187"/><rect x="18.90" y="73.00" width="6.95" height="8.00" fill="#d0a27b"/><rect x="26.85" y="73.00" width="6.95" height="8.00" fill="#d5936c"/><rect x="34.80" y="73.00" width="6.95" height="8.00" fill="#e08443"/><rect x="42.75" y="73.00" width="6.95" height="8.00" fill="#e5b148"/><rect x="50.70" y="73.00" width="6.95" height="8.00" fill="#e5b03a"/><rect x="58.65" y="73.00" width="6.95" height="8.00" fill="#f8f8f8"/><rect x="66.60" y="73.00" width="6.95" height="8.00" fill="#f8f8f8"/><rect x="74.55" y="73.00" width="6.95" height="8.00" fill="#f8f8f8"/><rect x="82.50" y="73.00" width="6.95" height="8.00" fill="#f8f8f8"/><rect x="90.45" y="73.00" width="6.95" height="8.00" fill="#f8f8f8"/><rect x="98.40" y="73.00" width="6.95" height="8.00" fill="#f8f8f8"/><rect x="106.35" y="73.00" width="6.95" height="8.00" fill="#4db640"/><rect x="114.30" y="73.00" width="6.95" height="8.00" fill="#4db640"/><rect x="122.25" y="73.00" width="6.95" height="8.00" fill="#4a8c99"/><rect x="130.20" y="73.00" width="6.95" height="8.00" fill="#4a8c8c"/><rect x="138.15" y="73.00" width="6.95" height="8.00" fill="#588d9a"/><rect x="146.10" y="73.00" width="6.95" height="8.00" fill="#6e969c"/><rect x="154.05" y="73.00" width="6.95" height="8.00" fill="#759696"/><rect x="3.00" y="81.00" width="6.95" height="8.00" fill="#ba997f"/><rect x="10.95" y="81.00" width="6.95" height="8.00" fill="#c2a187"/><rect x="18.90" y="81.00" width="6.95" height="8.00" fill="#d5936c"/><rect x="26.85" y="81.00" width="6.95" height="8.00" fill="#d5936c"/><rect x="34.80" y="81.00" width="6.95" height="8.00" fill="#e08443"/><rect x="42.75" y="81.00" width="6.95" height="8.00" fill="#e08443"/><rect x="50.70" y="81.00" width="6.95" height="8.00" fill="#f8f8f8"/><rect x="58.65" y="81.00" width="6.95" height="8.00" fill="#f8f8f8"/><rect x="66.60" y="81.00" width="6.95" height="8.00" fill="#f8f8f8"/><rect x="74.55" y="81.00" width="6.95" height="8.00" fill="#f8f8f8"/><rect x="82.50" y="81.00" width="6.95" height="8.00" fill="#f8f8f8"/><rect x="90.45" y="81.00" width="6.95" height="8.00" fill="#f8f8f8"/><rect x="98.40" y="81.00" width="6.95" height="8.00" fill="#f8f8f8"/><rect x="106.35" y="81.00" width="6.95" height="8.00" fill="#f8f8f8"/><rect x="114.30" y="81.00" width="6.95" height="8.00" fill="#3e9a9a"/><rect x="122.25" y="81.00" width="6.95" height="8.00" fill="#438c99"/><rect x="130.20" y="81.00" width="6.95" height="8.00" fill="#4a8c99"/><rect x="138.15" y="81.00" width="6.95" height="8.00" fill="#588d9a"/><rect x="146.10" y="81.00" width="6.95" height="8.00" fill="#67959c"/><rect x="154.05" y="81.00" width="6.95" height="8.00" fill="#759696"/><rect x="3.00" y="89.00" width="6.95" height="8.00" fill="#c3a98f"/><rect x="10.95" y="89.00" width="6.95" height="8.00" fill="#c2a187"/><rect x="18.90" y="89.00" width="6.95" height="8.00" fill="#d5936c"/><rect x="26.85" y="89.00" width="6.95" height="8.00" fill="#d69b74"/><rect x="34.80" y="89.00" width="6.95" height="8.00" fill="#e18c44"/><rect x="42.75" y="89.00" width="6.95" height="8.00" fill="#e18c44"/><rect x="50.70" y="89.00" width="6.95" height="8.00" fill="#f8f8f8"/><rect x="58.65" y="89.00" width="6.95" height="8.00" fill="#f8f8f8"/><rect x="66.60" y="89.00" width="6.95" height="8.00" fill="#f8f8f8"/><rect x="74.55" y="89.00" width="6.95" height="8.00" fill="#f8f8f8"/><rect x="82.50" y="89.00" width="6.95" height="8.00" fill="#f8f8f8"/><rect x="90.45" y="89.00" width="6.95" height="8.00" fill="#f8f8f8"/><rect x="98.40" y="89.00" width="6.95" height="8.00" fill="#f8f8f8"/><rect x="106.35" y="89.00" width="6.95" height="8.00" fill="#f8f8f8"/><rect x="114.30" y="89.00" width="6.95" height="8.00" fill="#3e9a8d"/><rect x="122.25" y="89.00" width="6.95" height="8.00" fill="#3e9a8d"/><rect x="130.20" y="89.00" width="6.95" height="8.00" fill="#4c9b94"/><rect x="138.15" y="89.00" width="6.95" height="8.00" fill="#5a9c95"/><rect x="146.10" y="89.00" width="6.95" height="8.00" fill="#67958e"/><rect x="154.05" y="89.00" width="6.95" height="8.00" fill="#75968f"/><rect x="3.00" y="97.00" width="6.95" height="8.00" fill="#bba187"/><rect x="10.95" y="97.00" width="6.95" height="8.00" fill="#ba997f"/><rect x="18.90" y="97.00" width="6.95" height="8.00" fill="#ce936c"/><rect x="26.85" y="97.00" width="6.95" height="8.00" fill="#cd8b6b"/><rect x="34.80" y="97.00" width="6.95" height="8.00" fill="#df7d42"/><rect x="42.75" y="97.00" width="6.95" height="8.00" fill="#df7d3b"/><rect x="50.70" y="97.00" width="6.95" height="8.00" fill="#f8f8f8"/><rect x="58.65" y="97.00" width="6.95" height="8.00" fill="#f8f8f8"/><rect x="66.60" y="97.00" width="6.95" height="8.00" fill="#f8f8f8"/><rect x="74.55" y="97.00" width="6.95" height="8.00" fill="#f8f8f8"/><rect x="82.50" y="97.00" width="6.95" height="8.00" fill="#f8f8f8"/><rect x="90.45" y="97.00" width="6.95" height="8.00" fill="#f8f8f8"/><rect x="98.40" y="97.00" width="6.95" height="8.00" fill="#f8f8f8"/><rect x="106.35" y="97.00" width="6.95" height="8.00" fill="#f8f8f8"/><rect x="114.30" y="97.00" width="6.95" height="8.00" fill="#3476cb"/><rect x="122.25" y="97.00" width="6.95" height="8.00" fill="#3c7ecc"/><rect x="130.20" y="97.00" width="6.95" height="8.00" fill="#4276bf"/><rect x="138.15" y="97.00" width="6.95" height="8.00" fill="#5077b2"/><rect x="146.10" y="97.00" width="6.95" height="8.00" fill="#577fac"/><rect x="154.05" y="97.00" width="6.95" height="8.00" fill="#6687a7"/><rect x="3.00" y="105.00" width="6.95" height="8.00" fill="#ba9a86"/><rect x="10.95" y="105.00" width="6.95" height="8.00" fill="#b99278"/><rect x="18.90" y="105.00" width="6.95" height="8.00" fill="#cd8b6b"/><rect x="26.85" y="105.00" width="6.95" height="8.00" fill="#cc846a"/><rect x="34.80" y="105.00" width="6.95" height="8.00" fill="#dd6e33"/><rect x="42.75" y="105.00" width="6.95" height="8.00" fill="#dd6e33"/><rect x="50.70" y="105.00" width="6.95" height="8.00" fill="#f8f8f8"/><rect x="58.65" y="105.00" width="6.95" height="8.00" fill="#f8f8f8"/><rect x="66.60" y="105.00" width="6.95" height="8.00" fill="#f8f8f8"/><rect x="74.55" y="105.00" width="6.95" height="8.00" fill="#f8f8f8"/><rect x="82.50" y="105.00" width="6.95" height="8.00" fill="#f8f8f8"/><rect x="90.45" y="105.00" width="6.95" height="8.00" fill="#f8f8f8"/><rect x="98.40" y="105.00" width="6.95" height="8.00" fill="#f8f8f8"/><rect x="106.35" y="105.00" width="6.95" height="8.00" fill="#f8f8f8"/><rect x="114.30" y="105.00" width="6.95" height="8.00" fill="#2c6eca"/><rect x="122.25" y="105.00" width="6.95" height="8.00" fill="#3476cb"/><rect x="130.20" y="105.00" width="6.95" height="8.00" fill="#3a6fbd"/><rect x="138.15" y="105.00" width="6.95" height="8.00" fill="#486fb1"/><rect x="146.10" y="105.00" width="6.95" height="8.00" fill="#5677ac"/><rect x="154.05" y="105.00" width="6.95" height="8.00" fill="#657fa7"/><rect x="3.00" y="113.00" width="6.95" height="8.00" fill="#b99278"/><rect x="10.95" y="113.00" width="6.95" height="8.00" fill="#b9927e"/><rect x="18.90" y="113.00" width="6.95" height="8.00" fill="#c68b71"/><rect x="26.85" y="113.00" width="6.95" height="8.00" fill="#cc846a"/><rect x="34.80" y="113.00" width="6.95" height="8.00" fill="#de6e3a"/><rect x="42.75" y="113.00" width="6.95" height="8.00" fill="#c82b38"/><rect x="50.70" y="113.00" width="6.95" height="8.00" fill="#c72337"/><rect x="58.65" y="113.00" width="6.95" height="8.00" fill="#f8f8f8"/><rect x="66.60" y="113.00" width="6.95" height="8.00" fill="#f8f8f8"/><rect x="74.55" y="113.00" width="6.95" height="8.00" fill="#f8f8f8"/><rect x="82.50" y="113.00" width="6.95" height="8.00" fill="#f8f8f8"/><rect x="90.45" y="113.00" width="6.95" height="8.00" fill="#f8f8f8"/><rect x="98.40" y="113.00" width="6.95" height="8.00" fill="#f8f8f8"/><rect x="106.35" y="113.00" width="6.95" height="8.00" fill="#4f35ab"/><rect x="114.30" y="113.00" width="6.95" height="8.00" fill="#4f35b1"/><rect x="122.25" y="113.00" width="6.95" height="8.00" fill="#3476cb"/><rect x="130.20" y="113.00" width="6.95" height="8.00" fill="#416fbe"/><rect x="138.15" y="113.00" width="6.95" height="8.00" fill="#486fb1"/><rect x="146.10" y="113.00" width="6.95" height="8.00" fill="#5677a5"/><rect x="154.05" y="113.00" width="6.95" height="8.00" fill="#657fa0"/><rect x="3.00" y="121.00" width="6.95" height="8.00" fill="#ba9285"/><rect x="10.95" y="121.00" width="6.95" height="8.00" fill="#ba9285"/><rect x="18.90" y="121.00" width="6.95" height="8.00" fill="#b88376"/><rect x="26.85" y="121.00" width="6.95" height="8.00" fill="#c58470"/><rect x="34.80" y="121.00" width="6.95" height="8.00" fill="#bf4f49"/><rect x="42.75" y="121.00" width="6.95" height="8.00" fill="#be4848"/><rect x="50.70" y="121.00" width="6.95" height="8.00" fill="#c82b38"/><rect x="58.65" y="121.00" width="6.95" height="8.00" fill="#c72329"/><rect x="66.60" y="121.00" width="6.95" height="8.00" fill="#f8f8f8"/><rect x="74.55" y="121.00" width="6.95" height="8.00" fill="#f8f8f8"/><rect x="82.50" y="121.00" width="6.95" height="8.00" fill="#f8f8f8"/><rect x="90.45" y="121.00" width="6.95" height="8.00" fill="#f8f8f8"/><rect x="98.40" y="121.00" width="6.95" height="8.00" fill="#4e2daa"/><rect x="106.35" y="121.00" width="6.95" height="8.00" fill="#4e2daa"/><rect x="114.30" y="121.00" width="6.95" height="8.00" fill="#4f35a4"/><rect x="122.25" y="121.00" width="6.95" height="8.00" fill="#50439f"/><rect x="130.20" y="121.00" width="6.95" height="8.00" fill="#5077b2"/><rect x="138.15" y="121.00" width="6.95" height="8.00" fill="#5077b2"/><rect x="146.10" y="121.00" width="6.95" height="8.00" fill="#5d77a5"/><rect x="154.05" y="121.00" width="6.95" height="8.00" fill="#657fa0"/><rect x="3.00" y="129.00" width="6.95" height="8.00" fill="#f8f8f8"/><rect x="10.95" y="129.00" width="6.95" height="8.00" fill="#aa827c"/><rect x="18.90" y="129.00" width="6.95" height="8.00" fill="#a87373"/><rect x="26.85" y="129.00" width="6.95" height="8.00" fill="#a87373"/><rect x="34.80" y="129.00" width="6.95" height="8.00" fill="#b25656"/><rect x="42.75" y="129.00" width="6.95" height="8.00" fill="#b14e4e"/><rect x="50.70" y="129.00" width="6.95" height="8.00" fill="#be4848"/><rect x="58.65" y="129.00" width="6.95" height="8.00" fill="#c82b38"/><rect x="66.60" y="129.00" width="6.95" height="8.00" fill="#82204e"/><rect x="74.55" y="129.00" width="6.95" height="8.00" fill="#83275c"/><rect x="82.50" y="129.00" width="6.95" height="8.00" fill="#741f4d"/><rect x="90.45" y="129.00" width="6.95" height="8.00" fill="#672067"/><rect x="98.40" y="129.00" width="6.95" height="8.00" fill="#4e2daa"/><rect x="106.35" y="129.00" width="6.95" height="8.00" fill="#4e2daa"/><rect x="114.30" y="129.00" width="6.95" height="8.00" fill="#4e3489"/><rect x="122.25" y="129.00" width="6.95" height="8.00" fill="#4e3489"/><rect x="130.20" y="129.00" width="6.95" height="8.00" fill="#4e3489"/><rect x="138.15" y="129.00" width="6.95" height="8.00" fill="#504a85"/><rect x="146.10" y="129.00" width="6.95" height="8.00" fill="#5d779f"/><rect x="154.05" y="129.00" width="6.95" height="8.00" fill="#f8f8f8"/><rect x="3.00" y="137.00" width="6.95" height="8.00" fill="#f8f8f8"/><rect x="10.95" y="137.00" width="6.95" height="8.00" fill="#f8f8f8"/><rect x="18.90" y="137.00" width="6.95" height="8.00" fill="#a17373"/><rect x="26.85" y="137.00" width="6.95" height="8.00" fill="#a17373"/><rect x="34.80" y="137.00" width="6.95" height="8.00" fill="#a66464"/><rect x="42.75" y="137.00" width="6.95" height="8.00" fill="#b25656"/><rect x="50.70" y="137.00" width="6.95" height="8.00" fill="#b14e4e"/><rect x="58.65" y="137.00" width="6.95" height="8.00" fill="#b14e4e"/><rect x="66.60" y="137.00" width="6.95" height="8.00" fill="#741f4d"/><rect x="74.55" y="137.00" width="6.95" height="8.00" fill="#70265b"/><rect x="82.50" y="137.00" width="6.95" height="8.00" fill="#661e53"/><rect x="90.45" y="137.00" width="6.95" height="8.00" fill="#591e66"/><rect x="98.40" y="137.00" width="6.95" height="8.00" fill="#4c2581"/><rect x="106.35" y="137.00" width="6.95" height="8.00" fill="#4e3489"/><rect x="114.30" y="137.00" width="6.95" height="8.00" fill="#4e3482"/><rect x="122.25" y="137.00" width="6.95" height="8.00" fill="#4e3482"/><rect x="130.20" y="137.00" width="6.95" height="8.00" fill="#4e3482"/><rect x="138.15" y="137.00" width="6.95" height="8.00" fill="#4e347c"/><rect x="146.10" y="137.00" width="6.95" height="8.00" fill="#f8f8f8"/><rect x="154.05" y="137.00" width="6.95" height="8.00" fill="#f8f8f8"/><rect x="3.00" y="145.00" width="6.95" height="8.00" fill="#f8f8f8"/><rect x="10.95" y="145.00" width="6.95" height="8.00" fill="#f8f8f8"/><rect x="18.90" y="145.00" width="6.95" height="8.00" fill="#9a7373"/><rect x="26.85" y="145.00" width="6.95" height="8.00" fill="#a17373"/><rect x="34.80" y="145.00" width="6.95" height="8.00" fill="#a87373"/><rect x="42.75" y="145.00" width="6.95" height="8.00" fill="#a66464"/><rect x="50.70" y="145.00" width="6.95" height="8.00" fill="#643850"/><rect x="58.65" y="145.00" width="6.95" height="8.00" fill="#643850"/><rect x="66.60" y="145.00" width="6.95" height="8.00" fill="#603455"/><rect x="74.55" y="145.00" width="6.95" height="8.00" fill="#603455"/><rect x="82.50" y="145.00" width="6.95" height="8.00" fill="#582e4e"/><rect x="90.45" y="145.00" width="6.95" height="8.00" fill="#582e4e"/><rect x="98.40" y="145.00" width="6.95" height="8.00" fill="#4d3364"/><rect x="106.35" y="145.00" width="6.95" height="8.00" fill="#4d335f"/><rect x="114.30" y="145.00" width="6.95" height="8.00" fill="#4c3a68"/><rect x="122.25" y="145.00" width="6.95" height="8.00" fill="#4c3a68"/><rect x="130.20" y="145.00" width="6.95" height="8.00" fill="#4c3a68"/><rect x="138.15" y="145.00" width="6.95" height="8.00" fill="#f8f8f8"/><rect x="146.10" y="145.00" width="6.95" height="8.00" fill="#f8f8f8"/><rect x="154.05" y="145.00" width="6.95" height="8.00" fill="#f8f8f8"/><rect x="3.00" y="153.00" width="6.95" height="8.00" fill="#f8f8f8"/><rect x="10.95" y="153.00" width="6.95" height="8.00" fill="#f8f8f8"/><rect x="18.90" y="153.00" width="6.95" height="8.00" fill="#f8f8f8"/><rect x="26.85" y="153.00" width="6.95" height="8.00" fill="#a38282"/><rect x="34.80" y="153.00" width="6.95" height="8.00" fill="#a38282"/><rect x="42.75" y="153.00" width="6.95" height="8.00" fill="#aa8383"/><rect x="50.70" y="153.00" width="6.95" height="8.00" fill="#5d3857"/><rect x="58.65" y="153.00" width="6.95" height="8.00" fill="#5d3857"/><rect x="66.60" y="153.00" width="6.95" height="8.00" fill="#5d3857"/><rect x="74.55" y="153.00" width="6.95" height="8.00" fill="#5d3857"/><rect x="82.50" y="153.00" width="6.95" height="8.00" fill="#53314f"/><rect x="90.45" y="153.00" width="6.95" height="8.00" fill="#53314f"/><rect x="98.40" y="153.00" width="6.95" height="8.00" fill="#4c3757"/><rect x="106.35" y="153.00" width="6.95" height="8.00" fill="#4c3757"/><rect x="114.30" y="153.00" width="6.95" height="8.00" fill="#4c3760"/><rect x="122.25" y="153.00" width="6.95" height="8.00" fill="#4c3760"/><rect x="130.20" y="153.00" width="6.95" height="8.00" fill="#4c3760"/><rect x="138.15" y="153.00" width="6.95" height="8.00" fill="#f8f8f8"/><rect x="146.10" y="153.00" width="6.95" height="8.00" fill="#f8f8f8"/><rect x="154.05" y="153.00" width="6.95" height="8.00" fill="#f8f8f8"/><rect x="3.00" y="161.00" width="6.95" height="8.00" fill="#f8f8f8"/><rect x="10.95" y="161.00" width="6.95" height="8.00" fill="#f8f8f8"/><rect x="18.90" y="161.00" width="6.95" height="8.00" fill="#f8f8f8"/><rect x="26.85" y="161.00" width="6.95" height="8.00" fill="#f8f8f8"/><rect x="34.80" y="161.00" width="6.95" height="8.00" fill="#f8f8f8"/><rect x="42.75" y="161.00" width="6.95" height="8.00" fill="#45323f"/><rect x="50.70" y="161.00" width="6.95" height="8.00" fill="#583855"/><rect x="58.65" y="161.00" width="6.95" height="8.00" fill="#583855"/><rect x="66.60" y="161.00" width="6.95" height="8.00" fill="#583855"/><rect x="74.55" y="161.00" width="6.95" height="8.00" fill="#583855"/><rect x="82.50" y="161.00" width="6.95" height="8.00" fill="#52374f"/><rect x="90.45" y="161.00" width="6.95" height="8.00" fill="#52374f"/><rect x="98.40" y="161.00" width="6.95" height="8.00" fill="#4c3752"/><rect x="106.35" y="161.00" width="6.95" height="8.00" fill="#4c3752"/><rect x="114.30" y="161.00" width="6.95" height="8.00" fill="#37313e"/><rect x="122.25" y="161.00" width="6.95" height="8.00" fill="#f8f8f8"/><rect x="130.20" y="161.00" width="6.95" height="8.00" fill="#f8f8f8"/><rect x="138.15" y="161.00" width="6.95" height="8.00" fill="#f8f8f8"/><rect x="146.10" y="161.00" width="6.95" height="8.00" fill="#f8f8f8"/><rect x="154.05" y="161.00" width="6.95" height="8.00" fill="#f8f8f8"/><rect x="3.00" y="169.00" width="6.95" height="8.00" fill="#f8f8f8"/><rect x="10.95" y="169.00" width="6.95" height="8.00" fill="#f8f8f8"/><rect x="18.90" y="169.00" width="6.95" height="8.00" fill="#f8f8f8"/><rect x="26.85" y="169.00" width="6.95" height="8.00" fill="#f8f8f8"/><rect x="34.80" y="169.00" width="6.95" height="8.00" fill="#f8f8f8"/><rect x="42.75" y="169.00" width="6.95" height="8.00" fill="#f8f8f8"/><rect x="50.70" y="169.00" width="6.95" height="8.00" fill="#54374f"/><rect x="58.65" y="169.00" width="6.95" height="8.00" fill="#54374f"/><rect x="66.60" y="169.00" width="6.95" height="8.00" fill="#54374f"/><rect x="74.55" y="169.00" width="6.95" height="8.00" fill="#54374f"/><rect x="82.50" y="169.00" width="6.95" height="8.00" fill="#52374f"/><rect x="90.45" y="169.00" width="6.95" height="8.00" fill="#52374f"/><rect x="98.40" y="169.00" width="6.95" height="8.00" fill="#4c3752"/><rect x="106.35" y="169.00" width="6.95" height="8.00" fill="#4c3752"/><rect x="114.30" y="169.00" width="6.95" height="8.00" fill="#f8f8f8"/><rect x="122.25" y="169.00" width="6.95" height="8.00" fill="#f8f8f8"/><rect x="130.20" y="169.00" width="6.95" height="8.00" fill="#f8f8f8"/><rect x="138.15" y="169.00" width="6.95" height="8.00" fill="#f8f8f8"/><rect x="146.10" y="169.00" width="6.95" height="8.00" fill="#f8f8f8"/><rect x="154.05" y="169.00" width="6.95" height="8.00" fill="#f8f8f8"/><rect x="3.00" y="24.00" width="6.95" height="1" fill="#a9a9a9"/><rect x="10.95" y="24.00" width="6.95" height="1" fill="#a9a9a9"/><rect x="18.90" y="24.00" width="6.95" height="1" fill="#a9a9a9"/><rect x="26.85" y="24.00" width="6.95" height="1" fill="#a9a9a9"/><rect x="34.80" y="24.00" width="6.95" height="1" fill="#a9a9a9"/><rect x="42.75" y="24.00" width="6.95" height="1" fill="#a9a9a9"/><rect x="50.70" y="24.00" width="6.95" height="1" fill="#000" opacity="0.08"/><rect x="58.65" y="24.00" width="6.95" height="1" fill="#000" opacity="0.08"/><rect x="66.60" y="24.00" width="6.95" height="1" fill="#000" opacity="0.08"/><rect x="74.55" y="24.00" width="6.95" height="1" fill="#000" opacity="0.08"/><rect x="82.50" y="24.00" width="6.95" height="1" fill="#000" opacity="0.08"/><rect x="90.45" y="24.00" width="6.95" height="1" fill="#000" opacity="0.08"/><rect x="98.40" y="24.00" width="6.95" height="1" fill="#000" opacity="0.08"/><rect x="106.35" y="24.00" width="6.95" height="1" fill="#000" opacity="0.08"/><rect x="114.30" y="24.00" width="6.95" height="1" fill="#a9a9a9"/><rect x="122.25" y="24.00" width="6.95" height="1" fill="#a9a9a9"/><rect x="130.20" y="24.00" width="6.95" height="1" fill="#a9a9a9"/><rect x="138.15" y="24.00" width="6.95" height="1" fill="#a9a9a9"/><rect x="146.10" y="24.00" width="6.95" height="1" fill="#a9a9a9"/><rect x="154.05" y="24.00" width="6.95" height="1" fill="#a9a9a9"/><rect x="3.00" y="32.00" width="6.95" height="1" fill="#a9a9a9"/><rect x="10.95" y="32.00" width="6.95" height="1" fill="#a9a9a9"/><rect x="18.90" y="32.00" width="6.95" height="1" fill="#a9a9a9"/><rect x="26.85" y="32.00" width="6.95" height="1" fill="#a9a9a9"/><rect x="34.80" y="32.00" width="6.95" height="1" fill="#a9a9a9"/><rect x="42.75" y="32.00" width="6.95" height="1" fill="#a9a9a9"/><rect x="50.70" y="32.00" width="6.95" height="1" fill="#000" opacity="0.08"/><rect x="58.65" y="32.00" width="6.95" height="1" fill="#000" opacity="0.08"/><rect x="66.60" y="32.00" width="6.95" height="1" fill="#000" opacity="0.08"/><rect x="74.55" y="32.00" width="6.95" height="1" fill="#000" opacity="0.08"/><rect x="82.50" y="32.00" width="6.95" height="1" fill="#000" opacity="0.08"/><rect x="90.45" y="32.00" width="6.95" height="1" fill="#000" opacity="0.08"/><rect x="98.40" y="32.00" width="6.95" height="1" fill="#000" opacity="0.08"/><rect x="106.35" y="32.00" width="6.95" height="1" fill="#000" opacity="0.08"/><rect x="114.30" y="32.00" width="6.95" height="1" fill="#000" opacity="0.08"/><rect x="122.25" y="32.00" width="6.95" height="1" fill="#a9a9a9"/><rect x="130.20" y="32.00" width="6.95" height="1" fill="#a9a9a9"/><rect x="138.15" y="32.00" width="6.95" height="1" fill="#a9a9a9"/><rect x="146.10" y="32.00" width="6.95" height="1" fill="#a9a9a9"/><rect x="154.05" y="32.00" width="6.95" height="1" fill="#a9a9a9"/><rect x="3.00" y="40.00" width="6.95" height="1" fill="#a9a9a9"/><rect x="10.95" y="40.00" width="6.95" height="1" fill="#a9a9a9"/><rect x="18.90" y="40.00" width="6.95" height="1" fill="#a9a9a9"/><rect x="26.85" y="40.00" width="6.95" height="1" fill="#000" opacity="0.08"/><rect x="34.80" y="40.00" width="6.95" height="1" fill="#000" opacity="0.08"/><rect x="42.75" y="40.00" width="6.95" height="1" fill="#000" opacity="0.08"/><rect x="50.70" y="40.00" width="6.95" height="1" fill="#000" opacity="0.08"/><rect x="58.65" y="40.00" width="6.95" height="1" fill="#000" opacity="0.08"/><rect x="66.60" y="40.00" width="6.95" height="1" fill="#000" opacity="0.08"/><rect x="74.55" y="40.00" width="6.95" height="1" fill="#000" opacity="0.08"/><rect x="82.50" y="40.00" width="6.95" height="1" fill="#000" opacity="0.08"/><rect x="90.45" y="40.00" width="6.95" height="1" fill="#000" opacity="0.08"/><rect x="98.40" y="40.00" width="6.95" height="1" fill="#000" opacity="0.08"/><rect x="106.35" y="40.00" width="6.95" height="1" fill="#000" opacity="0.08"/><rect x="114.30" y="40.00" width="6.95" height="1" fill="#000" opacity="0.08"/><rect x="122.25" y="40.00" width="6.95" height="1" fill="#000" opacity="0.08"/><rect x="130.20" y="40.00" width="6.95" height="1" fill="#000" opacity="0.08"/><rect x="138.15" y="40.00" width="6.95" height="1" fill="#a9a9a9"/><rect x="146.10" y="40.00" width="6.95" height="1" fill="#a9a9a9"/><rect x="154.05" y="40.00" width="6.95" height="1" fill="#a9a9a9"/><rect x="3.00" y="48.00" width="6.95" height="1" fill="#a9a9a9"/><rect x="10.95" y="48.00" width="6.95" height="1" fill="#a9a9a9"/><rect x="18.90" y="48.00" width="6.95" height="1" fill="#000" opacity="0.08"/><rect x="26.85" y="48.00" width="6.95" height="1" fill="#000" opacity="0.08"/><rect x="34.80" y="48.00" width="6.95" height="1" fill="#000" opacity="0.08"/><rect x="42.75" y="48.00" width="6.95" height="1" fill="#000" opacity="0.08"/><rect x="50.70" y="48.00" width="6.95" height="1" fill="#000" opacity="0.08"/><rect x="58.65" y="48.00" width="6.95" height="1" fill="#000" opacity="0.08"/><rect x="66.60" y="48.00" width="6.95" height="1" fill="#000" opacity="0.08"/><rect x="74.55" y="48.00" width="6.95" height="1" fill="#000" opacity="0.08"/><rect x="82.50" y="48.00" width="6.95" height="1" fill="#000" opacity="0.08"/><rect x="90.45" y="48.00" width="6.95" height="1" fill="#000" opacity="0.08"/><rect x="98.40" y="48.00" width="6.95" height="1" fill="#000" opacity="0.08"/><rect x="106.35" y="48.00" width="6.95" height="1" fill="#000" opacity="0.08"/><rect x="114.30" y="48.00" width="6.95" height="1" fill="#000" opacity="0.08"/><rect x="122.25" y="48.00" width="6.95" height="1" fill="#000" opacity="0.08"/><rect x="130.20" y="48.00" width="6.95" height="1" fill="#000" opacity="0.08"/><rect x="138.15" y="48.00" width="6.95" height="1" fill="#000" opacity="0.08"/><rect x="146.10" y="48.00" width="6.95" height="1" fill="#a9a9a9"/><rect x="154.05" y="48.00" width="6.95" height="1" fill="#a9a9a9"/><rect x="3.00" y="56.00" width="6.95" height="1" fill="#a9a9a9"/><rect x="10.95" y="56.00" width="6.95" height="1" fill="#a9a9a9"/><rect x="18.90" y="56.00" width="6.95" height="1" fill="#000" opacity="0.08"/><rect x="26.85" y="56.00" width="6.95" height="1" fill="#000" opacity="0.08"/><rect x="34.80" y="56.00" width="6.95" height="1" fill="#000" opacity="0.08"/><rect x="42.75" y="56.00" width="6.95" height="1" fill="#000" opacity="0.08"/><rect x="50.70" y="56.00" width="6.95" height="1" fill="#000" opacity="0.08"/><rect x="58.65" y="56.00" width="6.95" height="1" fill="#000" opacity="0.08"/><rect x="66.60" y="56.00" width="6.95" height="1" fill="#000" opacity="0.08"/><rect x="74.55" y="56.00" width="6.95" height="1" fill="#000" opacity="0.08"/><rect x="82.50" y="56.00" width="6.95" height="1" fill="#000" opacity="0.08"/><rect x="90.45" y="56.00" width="6.95" height="1" fill="#000" opacity="0.08"/><rect x="98.40" y="56.00" width="6.95" height="1" fill="#000" opacity="0.08"/><rect x="106.35" y="56.00" width="6.95" height="1" fill="#000" opacity="0.08"/><rect x="114.30" y="56.00" width="6.95" height="1" fill="#000" opacity="0.08"/><rect x="122.25" y="56.00" width="6.95" height="1" fill="#000" opacity="0.08"/><rect x="130.20" y="56.00" width="6.95" height="1" fill="#000" opacity="0.08"/><rect x="138.15" y="56.00" width="6.95" height="1" fill="#000" opacity="0.08"/><rect x="146.10" y="56.00" width="6.95" height="1" fill="#a9a9a9"/><rect x="154.05" y="56.00" width="6.95" height="1" fill="#a9a9a9"/><rect x="3.00" y="64.00" width="6.95" height="1" fill="#a9a9a9"/><rect x="10.95" y="64.00" width="6.95" height="1" fill="#000" opacity="0.08"/><rect x="18.90" y="64.00" width="6.95" height="1" fill="#000" opacity="0.08"/><rect x="26.85" y="64.00" width="6.95" height="1" fill="#000" opacity="0.08"/><rect x="34.80" y="64.00" width="6.95" height="1" fill="#000" opacity="0.08"/><rect x="42.75" y="64.00" width="6.95" height="1" fill="#000" opacity="0.08"/><rect x="50.70" y="64.00" width="6.95" height="1" fill="#000" opacity="0.08"/><rect x="58.65" y="64.00" width="6.95" height="1" fill="#000" opacity="0.08"/><rect x="66.60" y="64.00" width="6.95" height="1" fill="#000" opacity="0.08"/><rect x="74.55" y="64.00" width="6.95" height="1" fill="#000" opacity="0.08"/><rect x="82.50" y="64.00" width="6.95" height="1" fill="#000" opacity="0.08"/><rect x="90.45" y="64.00" width="6.95" height="1" fill="#000" opacity="0.08"/><rect x="98.40" y="64.00" width="6.95" height="1" fill="#000" opacity="0.08"/><rect x="106.35" y="64.00" width="6.95" height="1" fill="#000" opacity="0.08"/><rect x="114.30" y="64.00" width="6.95" height="1" fill="#000" opacity="0.08"/><rect x="122.25" y="64.00" width="6.95" height="1" fill="#000" opacity="0.08"/><rect x="130.20" y="64.00" width="6.95" height="1" fill="#000" opacity="0.08"/><rect x="138.15" y="64.00" width="6.95" height="1" fill="#000" opacity="0.08"/><rect x="146.10" y="64.00" width="6.95" height="1" fill="#000" opacity="0.08"/><rect x="154.05" y="64.00" width="6.95" height="1" fill="#a9a9a9"/><rect x="3.00" y="72.00" width="6.95" height="1" fill="#000" opacity="0.08"/><rect x="10.95" y="72.00" width="6.95" height="1" fill="#000" opacity="0.08"/><rect x="18.90" y="72.00" width="6.95" height="1" fill="#000" opacity="0.08"/><rect x="26.85" y="72.00" width="6.95" height="1" fill="#000" opacity="0.08"/><rect x="34.80" y="72.00" width="6.95" height="1" fill="#000" opacity="0.08"/><rect x="42.75" y="72.00" width="6.95" height="1" fill="#000" opacity="0.08"/><rect x="50.70" y="72.00" width="6.95" height="1" fill="#000" opacity="0.08"/><rect x="58.65" y="72.00" width="6.95" height="1" fill="#000" opacity="0.08"/><rect x="66.60" y="72.00" width="6.95" height="1" fill="#a9a9a9"/><rect x="74.55" y="72.00" width="6.95" height="1" fill="#a9a9a9"/><rect x="82.50" y="72.00" width="6.95" height="1" fill="#a9a9a9"/><rect x="90.45" y="72.00" width="6.95" height="1" fill="#a9a9a9"/><rect x="98.40" y="72.00" width="6.95" height="1" fill="#000" opacity="0.08"/><rect x="106.35" y="72.00" width="6.95" height="1" fill="#000" opacity="0.08"/><rect x="114.30" y="72.00" width="6.95" height="1" fill="#000" opacity="0.08"/><rect x="122.25" y="72.00" width="6.95" height="1" fill="#000" opacity="0.08"/><rect x="130.20" y="72.00" width="6.95" height="1" fill="#000" opacity="0.08"/><rect x="138.15" y="72.00" width="6.95" height="1" fill="#000" opacity="0.08"/><rect x="146.10" y="72.00" width="6.95" height="1" fill="#000" opacity="0.08"/><rect x="154.05" y="72.00" width="6.95" height="1" fill="#000" opacity="0.08"/><rect x="3.00" y="80.00" width="6.95" height="1" fill="#000" opacity="0.08"/><rect x="10.95" y="80.00" width="6.95" height="1" fill="#000" opacity="0.08"/><rect x="18.90" y="80.00" width="6.95" height="1" fill="#000" opacity="0.08"/><rect x="26.85" y="80.00" width="6.95" height="1" fill="#000" opacity="0.08"/><rect x="34.80" y="80.00" width="6.95" height="1" fill="#000" opacity="0.08"/><rect x="42.75" y="80.00" width="6.95" height="1" fill="#000" opacity="0.08"/><rect x="50.70" y="80.00" width="6.95" height="1" fill="#000" opacity="0.08"/><rect x="58.65" y="80.00" width="6.95" height="1" fill="#a9a9a9"/><rect x="66.60" y="80.00" width="6.95" height="1" fill="#a9a9a9"/><rect x="74.55" y="80.00" width="6.95" height="1" fill="#a9a9a9"/><rect x="82.50" y="80.00" width="6.95" height="1" fill="#a9a9a9"/><rect x="90.45" y="80.00" width="6.95" height="1" fill="#a9a9a9"/><rect x="98.40" y="80.00" width="6.95" height="1" fill="#a9a9a9"/><rect x="106.35" y="80.00" width="6.95" height="1" fill="#000" opacity="0.08"/><rect x="114.30" y="80.00" width="6.95" height="1" fill="#000" opacity="0.08"/><rect x="122.25" y="80.00" width="6.95" height="1" fill="#000" opacity="0.08"/><rect x="130.20" y="80.00" width="6.95" height="1" fill="#000" opacity="0.08"/><rect x="138.15" y="80.00" width="6.95" height="1" fill="#000" opacity="0.08"/><rect x="146.10" y="80.00" width="6.95" height="1" fill="#000" opacity="0.08"/><rect x="154.05" y="80.00" width="6.95" height="1" fill="#000" opacity="0.08"/><rect x="3.00" y="88.00" width="6.95" height="1" fill="#000" opacity="0.08"/><rect x="10.95" y="88.00" width="6.95" height="1" fill="#000" opacity="0.08"/><rect x="18.90" y="88.00" width="6.95" height="1" fill="#000" opacity="0.08"/><rect x="26.85" y="88.00" width="6.95" height="1" fill="#000" opacity="0.08"/><rect x="34.80" y="88.00" width="6.95" height="1" fill="#000" opacity="0.08"/><rect x="42.75" y="88.00" width="6.95" height="1" fill="#000" opacity="0.08"/><rect x="50.70" y="88.00" width="6.95" height="1" fill="#a9a9a9"/><rect x="58.65" y="88.00" width="6.95" height="1" fill="#a9a9a9"/><rect x="66.60" y="88.00" width="6.95" height="1" fill="#a9a9a9"/><rect x="74.55" y="88.00" width="6.95" height="1" fill="#a9a9a9"/><rect x="82.50" y="88.00" width="6.95" height="1" fill="#a9a9a9"/><rect x="90.45" y="88.00" width="6.95" height="1" fill="#a9a9a9"/><rect x="98.40" y="88.00" width="6.95" height="1" fill="#a9a9a9"/><rect x="106.35" y="88.00" width="6.95" height="1" fill="#a9a9a9"/><rect x="114.30" y="88.00" width="6.95" height="1" fill="#000" opacity="0.08"/><rect x="122.25" y="88.00" width="6.95" height="1" fill="#000" opacity="0.08"/><rect x="130.20" y="88.00" width="6.95" height="1" fill="#000" opacity="0.08"/><rect x="138.15" y="88.00" width="6.95" height="1" fill="#000" opacity="0.08"/><rect x="146.10" y="88.00" width="6.95" height="1" fill="#000" opacity="0.08"/><rect x="154.05" y="88.00" width="6.95" height="1" fill="#000" opacity="0.08"/><rect x="3.00" y="96.00" width="6.95" height="1" fill="#000" opacity="0.08"/><rect x="10.95" y="96.00" width="6.95" height="1" fill="#000" opacity="0.08"/><rect x="18.90" y="96.00" width="6.95" height="1" fill="#000" opacity="0.08"/><rect x="26.85" y="96.00" width="6.95" height="1" fill="#000" opacity="0.08"/><rect x="34.80" y="96.00" width="6.95" height="1" fill="#000" opacity="0.08"/><rect x="42.75" y="96.00" width="6.95" height="1" fill="#000" opacity="0.08"/><rect x="50.70" y="96.00" width="6.95" height="1" fill="#a9a9a9"/><rect x="58.65" y="96.00" width="6.95" height="1" fill="#a9a9a9"/><rect x="66.60" y="96.00" width="6.95" height="1" fill="#a9a9a9"/><rect x="74.55" y="96.00" width="6.95" height="1" fill="#a9a9a9"/><rect x="82.50" y="96.00" width="6.95" height="1" fill="#a9a9a9"/><rect x="90.45" y="96.00" width="6.95" height="1" fill="#a9a9a9"/><rect x="98.40" y="96.00" width="6.95" height="1" fill="#a9a9a9"/><rect x="106.35" y="96.00" width="6.95" height="1" fill="#a9a9a9"/><rect x="114.30" y="96.00" width="6.95" height="1" fill="#000" opacity="0.08"/><rect x="122.25" y="96.00" width="6.95" height="1" fill="#000" opacity="0.08"/><rect x="130.20" y="96.00" width="6.95" height="1" fill="#000" opacity="0.08"/><rect x="138.15" y="96.00" width="6.95" height="1" fill="#000" opacity="0.08"/><rect x="146.10" y="96.00" width="6.95" height="1" fill="#000" opacity="0.08"/><rect x="154.05" y="96.00" width="6.95" height="1" fill="#000" opacity="0.08"/><rect x="3.00" y="104.00" width="6.95" height="1" fill="#000" opacity="0.08"/><rect x="10.95" y="104.00" width="6.95" height="1" fill="#000" opacity="0.08"/><rect x="18.90" y="104.00" width="6.95" height="1" fill="#000" opacity="0.08"/><rect x="26.85" y="104.00" width="6.95" height="1" fill="#000" opacity="0.08"/><rect x="34.80" y="104.00" width="6.95" height="1" fill="#000" opacity="0.08"/><rect x="42.75" y="104.00" width="6.95" height="1" fill="#000" opacity="0.08"/><rect x="50.70" y="104.00" width="6.95" height="1" fill="#a9a9a9"/><rect x="58.65" y="104.00" width="6.95" height="1" fill="#a9a9a9"/><rect x="66.60" y="104.00" width="6.95" height="1" fill="#a9a9a9"/><rect x="74.55" y="104.00" width="6.95" height="1" fill="#a9a9a9"/><rect x="82.50" y="104.00" width="6.95" height="1" fill="#a9a9a9"/><rect x="90.45" y="104.00" width="6.95" height="1" fill="#a9a9a9"/><rect x="98.40" y="104.00" width="6.95" height="1" fill="#a9a9a9"/><rect x="106.35" y="104.00" width="6.95" height="1" fill="#a9a9a9"/><rect x="114.30" y="104.00" width="6.95" height="1" fill="#000" opacity="0.08"/><rect x="122.25" y="104.00" width="6.95" height="1" fill="#000" opacity="0.08"/><rect x="130.20" y="104.00" width="6.95" height="1" fill="#000" opacity="0.08"/><rect x="138.15" y="104.00" width="6.95" height="1" fill="#000" opacity="0.08"/><rect x="146.10" y="104.00" width="6.95" height="1" fill="#000" opacity="0.08"/><rect x="154.05" y="104.00" width="6.95" height="1" fill="#000" opacity="0.08"/><rect x="3.00" y="112.00" width="6.95" height="1" fill="#000" opacity="0.08"/><rect x="10.95" y="112.00" width="6.95" height="1" fill="#000" opacity="0.08"/><rect x="18.90" y="112.00" width="6.95" height="1" fill="#000" opacity="0.08"/><rect x="26.85" y="112.00" width="6.95" height="1" fill="#000" opacity="0.08"/><rect x="34.80" y="112.00" width="6.95" height="1" fill="#000" opacity="0.08"/><rect x="42.75" y="112.00" width="6.95" height="1" fill="#000" opacity="0.08"/><rect x="50.70" y="112.00" width="6.95" height="1" fill="#a9a9a9"/><rect x="58.65" y="112.00" width="6.95" height="1" fill="#a9a9a9"/><rect x="66.60" y="112.00" width="6.95" height="1" fill="#a9a9a9"/><rect x="74.55" y="112.00" width="6.95" height="1" fill="#a9a9a9"/><rect x="82.50" y="112.00" width="6.95" height="1" fill="#a9a9a9"/><rect x="90.45" y="112.00" width="6.95" height="1" fill="#a9a9a9"/><rect x="98.40" y="112.00" width="6.95" height="1" fill="#a9a9a9"/><rect x="106.35" y="112.00" width="6.95" height="1" fill="#a9a9a9"/><rect x="114.30" y="112.00" width="6.95" height="1" fill="#000" opacity="0.08"/><rect x="122.25" y="112.00" width="6.95" height="1" fill="#000" opacity="0.08"/><rect x="130.20" y="112.00" width="6.95" height="1" fill="#000" opacity="0.08"/><rect x="138.15" y="112.00" width="6.95" height="1" fill="#000" opacity="0.08"/><rect x="146.10" y="112.00" width="6.95" height="1" fill="#000" opacity="0.08"/><rect x="154.05" y="112.00" width="6.95" height="1" fill="#000" opacity="0.08"/><rect x="3.00" y="120.00" width="6.95" height="1" fill="#000" opacity="0.08"/><rect x="10.95" y="120.00" width="6.95" height="1" fill="#000" opacity="0.08"/><rect x="18.90" y="120.00" width="6.95" height="1" fill="#000" opacity="0.08"/><rect x="26.85" y="120.00" width="6.95" height="1" fill="#000" opacity="0.08"/><rect x="34.80" y="120.00" width="6.95" height="1" fill="#000" opacity="0.08"/><rect x="42.75" y="120.00" width="6.95" height="1" fill="#000" opacity="0.08"/><rect x="50.70" y="120.00" width="6.95" height="1" fill="#000" opacity="0.08"/><rect x="58.65" y="120.00" width="6.95" height="1" fill="#a9a9a9"/><rect x="66.60" y="120.00" width="6.95" height="1" fill="#a9a9a9"/><rect x="74.55" y="120.00" width="6.95" height="1" fill="#a9a9a9"/><rect x="82.50" y="120.00" width="6.95" height="1" fill="#a9a9a9"/><rect x="90.45" y="120.00" width="6.95" height="1" fill="#a9a9a9"/><rect x="98.40" y="120.00" width="6.95" height="1" fill="#a9a9a9"/><rect x="106.35" y="120.00" width="6.95" height="1" fill="#000" opacity="0.08"/><rect x="114.30" y="120.00" width="6.95" height="1" fill="#000" opacity="0.08"/><rect x="122.25" y="120.00" width="6.95" height="1" fill="#000" opacity="0.08"/><rect x="130.20" y="120.00" width="6.95" height="1" fill="#000" opacity="0.08"/><rect x="138.15" y="120.00" width="6.95" height="1" fill="#000" opacity="0.08"/><rect x="146.10" y="120.00" width="6.95" height="1" fill="#000" opacity="0.08"/><rect x="154.05" y="120.00" width="6.95" height="1" fill="#000" opacity="0.08"/><rect x="3.00" y="128.00" width="6.95" height="1" fill="#000" opacity="0.08"/><rect x="10.95" y="128.00" width="6.95" height="1" fill="#000" opacity="0.08"/><rect x="18.90" y="128.00" width="6.95" height="1" fill="#000" opacity="0.08"/><rect x="26.85" y="128.00" width="6.95" height="1" fill="#000" opacity="0.08"/><rect x="34.80" y="128.00" width="6.95" height="1" fill="#000" opacity="0.08"/><rect x="42.75" y="128.00" width="6.95" height="1" fill="#000" opacity="0.08"/><rect x="50.70" y="128.00" width="6.95" height="1" fill="#000" opacity="0.08"/><rect x="58.65" y="128.00" width="6.95" height="1" fill="#000" opacity="0.08"/><rect x="66.60" y="128.00" width="6.95" height="1" fill="#a9a9a9"/><rect x="74.55" y="128.00" width="6.95" height="1" fill="#a9a9a9"/><rect x="82.50" y="128.00" width="6.95" height="1" fill="#a9a9a9"/><rect x="90.45" y="128.00" width="6.95" height="1" fill="#a9a9a9"/><rect x="98.40" y="128.00" width="6.95" height="1" fill="#000" opacity="0.08"/><rect x="106.35" y="128.00" width="6.95" height="1" fill="#000" opacity="0.08"/><rect x="114.30" y="128.00" width="6.95" height="1" fill="#000" opacity="0.08"/><rect x="122.25" y="128.00" width="6.95" height="1" fill="#000" opacity="0.08"/><rect x="130.20" y="128.00" width="6.95" height="1" fill="#000" opacity="0.08"/><rect x="138.15" y="128.00" width="6.95" height="1" fill="#000" opacity="0.08"/><rect x="146.10" y="128.00" width="6.95" height="1" fill="#000" opacity="0.08"/><rect x="154.05" y="128.00" width="6.95" height="1" fill="#000" opacity="0.08"/><rect x="3.00" y="136.00" width="6.95" height="1" fill="#a9a9a9"/><rect x="10.95" y="136.00" width="6.95" height="1" fill="#000" opacity="0.08"/><rect x="18.90" y="136.00" width="6.95" height="1" fill="#000" opacity="0.08"/><rect x="26.85" y="136.00" width="6.95" height="1" fill="#000" opacity="0.08"/><rect x="34.80" y="136.00" width="6.95" height="1" fill="#000" opacity="0.08"/><rect x="42.75" y="136.00" width="6.95" height="1" fill="#000" opacity="0.08"/><rect x="50.70" y="136.00" width="6.95" height="1" fill="#000" opacity="0.08"/><rect x="58.65" y="136.00" width="6.95" height="1" fill="#000" opacity="0.08"/><rect x="66.60" y="136.00" width="6.95" height="1" fill="#000" opacity="0.08"/><rect x="74.55" y="136.00" width="6.95" height="1" fill="#000" opacity="0.08"/><rect x="82.50" y="136.00" width="6.95" height="1" fill="#000" opacity="0.08"/><rect x="90.45" y="136.00" width="6.95" height="1" fill="#000" opacity="0.08"/><rect x="98.40" y="136.00" width="6.95" height="1" fill="#000" opacity="0.08"/><rect x="106.35" y="136.00" width="6.95" height="1" fill="#000" opacity="0.08"/><rect x="114.30" y="136.00" width="6.95" height="1" fill="#000" opacity="0.08"/><rect x="122.25" y="136.00" width="6.95" height="1" fill="#000" opacity="0.08"/><rect x="130.20" y="136.00" width="6.95" height="1" fill="#000" opacity="0.08"/><rect x="138.15" y="136.00" width="6.95" height="1" fill="#000" opacity="0.08"/><rect x="146.10" y="136.00" width="6.95" height="1" fill="#000" opacity="0.08"/><rect x="154.05" y="136.00" width="6.95" height="1" fill="#a9a9a9"/><rect x="3.00" y="144.00" width="6.95" height="1" fill="#a9a9a9"/><rect x="10.95" y="144.00" width="6.95" height="1" fill="#a9a9a9"/><rect x="18.90" y="144.00" width="6.95" height="1" fill="#000" opacity="0.08"/><rect x="26.85" y="144.00" width="6.95" height="1" fill="#000" opacity="0.08"/><rect x="34.80" y="144.00" width="6.95" height="1" fill="#000" opacity="0.08"/><rect x="42.75" y="144.00" width="6.95" height="1" fill="#000" opacity="0.08"/><rect x="50.70" y="144.00" width="6.95" height="1" fill="#000" opacity="0.08"/><rect x="58.65" y="144.00" width="6.95" height="1" fill="#000" opacity="0.08"/><rect x="66.60" y="144.00" width="6.95" height="1" fill="#000" opacity="0.08"/><rect x="74.55" y="144.00" width="6.95" height="1" fill="#000" opacity="0.08"/><rect x="82.50" y="144.00" width="6.95" height="1" fill="#000" opacity="0.08"/><rect x="90.45" y="144.00" width="6.95" height="1" fill="#000" opacity="0.08"/><rect x="98.40" y="144.00" width="6.95" height="1" fill="#000" opacity="0.08"/><rect x="106.35" y="144.00" width="6.95" height="1" fill="#000" opacity="0.08"/><rect x="114.30" y="144.00" width="6.95" height="1" fill="#000" opacity="0.08"/><rect x="122.25" y="144.00" width="6.95" height="1" fill="#000" opacity="0.08"/><rect x="130.20" y="144.00" width="6.95" height="1" fill="#000" opacity="0.08"/><rect x="138.15" y="144.00" width="6.95" height="1" fill="#000" opacity="0.08"/><rect x="146.10" y="144.00" width="6.95" height="1" fill="#a9a9a9"/><rect x="154.05" y="144.00" width="6.95" height="1" fill="#a9a9a9"/><rect x="3.00" y="152.00" width="6.95" height="1" fill="#a9a9a9"/><rect x="10.95" y="152.00" width="6.95" height="1" fill="#a9a9a9"/><rect x="18.90" y="152.00" width="6.95" height="1" fill="#000" opacity="0.08"/><rect x="26.85" y="152.00" width="6.95" height="1" fill="#000" opacity="0.08"/><rect x="34.80" y="152.00" width="6.95" height="1" fill="#000" opacity="0.08"/><rect x="42.75" y="152.00" width="6.95" height="1" fill="#000" opacity="0.08"/><rect x="50.70" y="152.00" width="6.95" height="1" fill="#000" opacity="0.08"/><rect x="58.65" y="152.00" width="6.95" height="1" fill="#000" opacity="0.08"/><rect x="66.60" y="152.00" width="6.95" height="1" fill="#000" opacity="0.08"/><rect x="74.55" y="152.00" width="6.95" height="1" fill="#000" opacity="0.08"/><rect x="82.50" y="152.00" width="6.95" height="1" fill="#000" opacity="0.08"/><rect x="90.45" y="152.00" width="6.95" height="1" fill="#000" opacity="0.08"/><rect x="98.40" y="152.00" width="6.95" height="1" fill="#000" opacity="0.08"/><rect x="106.35" y="152.00" width="6.95" height="1" fill="#000" opacity="0.08"/><rect x="114.30" y="152.00" width="6.95" height="1" fill="#000" opacity="0.08"/><rect x="122.25" y="152.00" width="6.95" height="1" fill="#000" opacity="0.08"/><rect x="130.20" y="152.00" width="6.95" height="1" fill="#000" opacity="0.08"/><rect x="138.15" y="152.00" width="6.95" height="1" fill="#a9a9a9"/><rect x="146.10" y="152.00" width="6.95" height="1" fill="#a9a9a9"/><rect x="154.05" y="152.00" width="6.95" height="1" fill="#a9a9a9"/><rect x="3.00" y="160.00" width="6.95" height="1" fill="#a9a9a9"/><rect x="10.95" y="160.00" width="6.95" height="1" fill="#a9a9a9"/><rect x="18.90" y="160.00" width="6.95" height="1" fill="#a9a9a9"/><rect x="26.85" y="160.00" width="6.95" height="1" fill="#000" opacity="0.08"/><rect x="34.80" y="160.00" width="6.95" height="1" fill="#000" opacity="0.08"/><rect x="42.75" y="160.00" width="6.95" height="1" fill="#000" opacity="0.08"/><rect x="50.70" y="160.00" width="6.95" height="1" fill="#000" opacity="0.08"/><rect x="58.65" y="160.00" width="6.95" height="1" fill="#000" opacity="0.08"/><rect x="66.60" y="160.00" width="6.95" height="1" fill="#000" opacity="0.08"/><rect x="74.55" y="160.00" width="6.95" height="1" fill="#000" opacity="0.08"/><rect x="82.50" y="160.00" width="6.95" height="1" fill="#000" opacity="0.08"/><rect x="90.45" y="160.00" width="6.95" height="1" fill="#000" opacity="0.08"/><rect x="98.40" y="160.00" width="6.95" height="1" fill="#000" opacity="0.08"/><rect x="106.35" y="160.00" width="6.95" height="1" fill="#000" opacity="0.08"/><rect x="114.30" y="160.00" width="6.95" height="1" fill="#000" opacity="0.08"/><rect x="122.25" y="160.00" width="6.95" height="1" fill="#000" opacity="0.08"/><rect x="130.20" y="160.00" width="6.95" height="1" fill="#000" opacity="0.08"/><rect x="138.15" y="160.00" width="6.95" height="1" fill="#a9a9a9"/><rect x="146.10" y="160.00" width="6.95" height="1" fill="#a9a9a9"/><rect x="154.05" y="160.00" width="6.95" height="1" fill="#a9a9a9"/><rect x="3.00" y="168.00" width="6.95" height="1" fill="#a9a9a9"/><rect x="10.95" y="168.00" width="6.95" height="1" fill="#a9a9a9"/><rect x="18.90" y="168.00" width="6.95" height="1" fill="#a9a9a9"/><rect x="26.85" y="168.00" width="6.95" height="1" fill="#a9a9a9"/><rect x="34.80" y="168.00" width="6.95" height="1" fill="#a9a9a9"/><rect x="42.75" y="168.00" width="6.95" height="1" fill="#000" opacity="0.08"/><rect x="50.70" y="168.00" width="6.95" height="1" fill="#000" opacity="0.08"/><rect x="58.65" y="168.00" width="6.95" height="1" fill="#000" opacity="0.08"/><rect x="66.60" y="168.00" width="6.95" height="1" fill="#000" opacity="0.08"/><rect x="74.55" y="168.00" width="6.95" height="1" fill="#000" opacity="0.08"/><rect x="82.50" y="168.00" width="6.95" height="1" fill="#000" opacity="0.08"/><rect x="90.45" y="168.00" width="6.95" height="1" fill="#000" opacity="0.08"/><rect x="98.40" y="168.00" width="6.95" height="1" fill="#000" opacity="0.08"/><rect x="106.35" y="168.00" width="6.95" height="1" fill="#000" opacity="0.08"/><rect x="114.30" y="168.00" width="6.95" height="1" fill="#000" opacity="0.08"/><rect x="122.25" y="168.00" width="6.95" height="1" fill="#a9a9a9"/><rect x="130.20" y="168.00" width="6.95" height="1" fill="#a9a9a9"/><rect x="138.15" y="168.00" width="6.95" height="1" fill="#a9a9a9"/><rect x="146.10" y="168.00" width="6.95" height="1" fill="#a9a9a9"/><rect x="154.05" y="168.00" width="6.95" height="1" fill="#a9a9a9"/><rect x="3.00" y="176.00" width="6.95" height="1" fill="#a9a9a9"/><rect x="10.95" y="176.00" width="6.95" height="1" fill="#a9a9a9"/><rect x="18.90" y="176.00" width="6.95" height="1" fill="#a9a9a9"/><rect x="26.85" y="176.00" width="6.95" height="1" fill="#a9a9a9"/><rect x="34.80" y="176.00" width="6.95" height="1" fill="#a9a9a9"/><rect x="42.75" y="176.00" width="6.95" height="1" fill="#a9a9a9"/><rect x="50.70" y="176.00" width="6.95" height="1" fill="#000" opacity="0.08"/><rect x="58.65" y="176.00" width="6.95" height="1" fill="#000" opacity="0.08"/><rect x="66.60" y="176.00" width="6.95" height="1" fill="#000" opacity="0.08"/><rect x="74.55" y="176.00" width="6.95" height="1" fill="#000" opacity="0.08"/><rect x="82.50" y="176.00" width="6.95" height="1" fill="#000" opacity="0.08"/><rect x="90.45" y="176.00" width="6.95" height="1" fill="#000" opacity="0.08"/><rect x="98.40" y="176.00" width="6.95" height="1" fill="#000" opacity="0.08"/><rect x="106.35" y="176.00" width="6.95" height="1" fill="#000" opacity="0.08"/><rect x="114.30" y="176.00" width="6.95" height="1" fill="#a9a9a9"/><rect x="122.25" y="176.00" width="6.95" height="1" fill="#a9a9a9"/><rect x="130.20" y="176.00" width="6.95" height="1" fill="#a9a9a9"/><rect x="138.15" y="176.00" width="6.95" height="1" fill="#a9a9a9"/><rect x="146.10" y="176.00" width="6.95" height="1" fill="#a9a9a9"/><rect x="154.05" y="176.00" width="6.95" height="1" fill="#a9a9a9"/></g></svg>
<svg class="a" style="left:1267px;top:180px" width="7" height="4"><path d="M0.5 3.5L3.5 0.5L6.5 3.5" fill="none" stroke="#888"/></svg>
<div class="a" style="left:1267px;top:189px;width:6px;height:115px;background:#676767"></div>
<svg class="a" style="left:1267px;top:321px" width="7" height="4"><path d="M0.5 0.5L3.5 3.5L6.5 0.5" fill="none" stroke="#888"/></svg>
<svg class="a" style="left:1229px;top:334px" width="10" height="10"><path d="M0.5 0.5H6.5L9.5 3.5V9.5H0.5Z" fill="none" stroke="#e0e0e0"/><rect x="3" y="3" width="5" height="5" fill="#e0e0e0"/></svg>
<svg class="a" style="left:1249px;top:334px" width="9" height="10"><path d="M0.5 1.5H8.5M1.5 2.5V9.5H7.5V2.5M3.5 3.5V8.5M5.5 3.5V8.5" fill="none" stroke="#9a9a9a"/></svg>
<div class="a" style="left:1103px;top:344px;width:172px;height:5px;background:#474747"></div>
<div class="a" style="left:1103px;top:349px;width:172px;height:12px;background:#434343"></div>
<div class="a" style="left:1103px;top:349px;width:29px;height:12px;background:#535353"></div>
<div class="t" style="left:1107px;top:352px;font-size:7px;color:#f4f4f4;font-weight:bold">Layers</div>
<div class="a" style="left:1265px;top:352px;width:8px;height:6px;background:#6c6c6c"></div>
<div class="a" style="left:1103px;top:361px;width:172px;height:327px;background:#535353"></div>
<div class="a" style="left:1105px;top:365px;width:62px;height:13px;background:#4a4a4a"></div>
<svg class="a" style="left:1109px;top:367px" width="9" height="9"><circle cx="5.5" cy="3.5" r="2.6" fill="none" stroke="#eee"/><path d="M3.5 5.5L0.8 8.2" stroke="#eee" stroke-width="1.2"/></svg>
<div class="t" style="left:1119px;top:368px;font-size:7.5px;color:#eeeeee">Kind</div>
<svg class="a" style="left:1158px;top:370px" width="6" height="4"><path d="M0.5 0.5L3 3L5.5 0.5" fill="none" stroke="#ccc"/></svg>
<svg class="a" style="left:1171px;top:366px" width="10" height="10"><rect x="0.5" y="0.5" width="9" height="9" fill="none" stroke="#e6e6e6"/><path d="M2 8L4 5L6 7L8 4V8Z" fill="#e6e6e6"/></svg>
<svg class="a" style="left:1186px;top:366px" width="10" height="10"><circle cx="5" cy="5" r="4.3" fill="none" stroke="#e6e6e6"/><path d="M5 0.7A4.3 4.3 0 0 1 5 9.3Z" fill="#e6e6e6" transform="rotate(45 5 5)"/></svg>
<div class="t" style="left:1203px;top:366px;font-size:10px;color:#e6e6e6;font-family:'Liberation Serif',serif">T</div>
<svg class="a" style="left:1218px;top:366px" width="10" height="10"><rect x="2" y="2" width="6" height="6" fill="none" stroke="#e6e6e6"/><path d="M0 2H2M8 2H10M0 8H2M8 8H10M2 0V2M8 0V2M2 8V10M8 8V10" stroke="#e6e6e6"/></svg>
<svg class="a" style="left:1234px;top:365px" width="10" height="11"><rect x="1" y="5" width="8" height="6" fill="#e6e6e6"/><path d="M3 5V3C3 1 7 1 7 3" fill="none" stroke="#e6e6e6"/></svg>
<div class="a" style="left:1252px;top:366px;width:7px;height:7px;border-radius:50%;background:#e8e8e8"></div>
<div class="a" style="left:1105px;top:382px;width:80px;height:13px;background:#4f4f4f"></div>
<div class="t" style="left:1110px;top:386px;font-size:7px;color:#7d7d7d">Pass Through</div>
<div class="t" style="left:1197px;top:386px;font-size:7px;color:#7d7d7d">Opacity:</div>
<div class="a" style="left:1227px;top:383px;width:40px;height:12px;background:#565656"></div>
<div class="a" style="left:1103px;top:398px;width:172px;height:1px;background:#4c4c4c"></div>
<div class="t" style="left:1106px;top:404px;font-size:7px;color:#7d7d7d">Lock:</div>
<svg class="a" style="left:1127px;top:402px" width="70" height="10"><rect x="1" y="1" width="8" height="8" fill="none" stroke="#8a8a8a"/><path d="M1 1H5V5H1ZM5 5H9V9H5Z" fill="#8a8a8a"/><path d="M17 9L23 1" stroke="#8a8a8a" stroke-width="1.5"/><path d="M34 0V10M29 5H39" stroke="#8a8a8a"/><path d="M44 8H54M46 7L48 2H52L54 7" fill="none" stroke="#8a8a8a"/><rect x="58" y="4" width="8" height="6" fill="#8a8a8a"/><path d="M60 4V2C60 0 64 0 64 2V4" fill="none" stroke="#8a8a8a"/></svg>
<div class="t" style="left:1212px;top:404px;font-size:7px;color:#6e6e6e">Fill:</div>
<div class="a" style="left:1103px;top:414px;width:172px;height:1px;background:#4c4c4c"></div>
<div class="a" style="left:1103px;top:416px;width:163px;height:4px;overflow:hidden"><div class="t" style="left:58px;top:-5px;font-size:7px;color:#e0e0e0;letter-spacing:-0.1px">player_face_f_worried_talk_lo...</div><div class="a" style="left:41px;top:0px;width:10px;height:2px;background:#e0e0e0"></div></div>
<div class="a" style="left:1103px;top:420px;width:163px;height:1px;background:#474747"></div>
<div class="a" style="left:1103px;top:438px;width:163px;height:1px;background:#474747"></div>
<div class="a" style="left:1106px;top:426px;width:13px;height:10px;border-right:1px solid #4c4c4c;border-bottom:1px solid #4c4c4c"></div>
<svg class="a" style="left:1136px;top:427px" width="4" height="7"><path d="M0.5 0.5L3.2 3.5L0.5 6.5" fill="none" stroke="#dcdcdc"/></svg>
<svg class="a" style="left:1143px;top:426px" width="11" height="9"><path d="M0.5 1.5H4L5 0.5H6V1.5H10.5V8.5H0.5Z" fill="#e4e4e4"/><rect x="1" y="3" width="9" height="5" fill="#f2f2f2"/></svg>
<div class="t" style="left:1161px;top:427px;font-size:7px;color:#ececec;letter-spacing:-0.1px">player_face_f_worried_talk_h...</div>
<div class="a" style="left:1103px;top:454px;width:163px;height:1px;background:#474747"></div>
<div class="a" style="left:1106px;top:442px;width:13px;height:10px;border-right:1px solid #4c4c4c;border-bottom:1px solid #4c4c4c"></div>
<svg class="a" style="left:1136px;top:443px" width="4" height="7"><path d="M0.5 0.5L3.2 3.5L0.5 6.5" fill="none" stroke="#dcdcdc"/></svg>
<svg class="a" style="left:1143px;top:442px" width="11" height="9"><path d="M0.5 1.5H4L5 0.5H6V1.5H10.5V8.5H0.5Z" fill="#e4e4e4"/><rect x="1" y="3" width="9" height="5" fill="#f2f2f2"/></svg>
<div class="t" style="left:1161px;top:443px;font-size:7px;color:#ececec;letter-spacing:-0.1px">player_face_f_worried_high</div>
<div class="a" style="left:1103px;top:469px;width:163px;height:1px;background:#474747"></div>
<div class="a" style="left:1106px;top:457px;width:13px;height:10px;border-right:1px solid #4c4c4c;border-bottom:1px solid #4c4c4c"></div>
<svg class="a" style="left:1136px;top:458px" width="4" height="7"><path d="M0.5 0.5L3.2 3.5L0.5 6.5" fill="none" stroke="#dcdcdc"/></svg>
<svg class="a" style="left:1143px;top:457px" width="11" height="9"><path d="M0.5 1.5H4L5 0.5H6V1.5H10.5V8.5H0.5Z" fill="#e4e4e4"/><rect x="1" y="3" width="9" height="5" fill="#f2f2f2"/></svg>
<div class="t" style="left:1161px;top:458px;font-size:7px;color:#ececec;letter-spacing:-0.1px">player_face_f_worried_talk_low</div>
<div class="a" style="left:1103px;top:485px;width:163px;height:1px;background:#474747"></div>
<div class="a" style="left:1106px;top:473px;width:13px;height:10px;border-right:1px solid #4c4c4c;border-bottom:1px solid #4c4c4c"></div>
<svg class="a" style="left:1136px;top:474px" width="4" height="7"><path d="M0.5 0.5L3.2 3.5L0.5 6.5" fill="none" stroke="#dcdcdc"/></svg>
<svg class="a" style="left:1143px;top:473px" width="11" height="9"><path d="M0.5 1.5H4L5 0.5H6V1.5H10.5V8.5H0.5Z" fill="#e4e4e4"/><rect x="1" y="3" width="9" height="5" fill="#f2f2f2"/></svg>
<div class="t" style="left:1161px;top:474px;font-size:7px;color:#ececec;letter-spacing:-0.1px">player_face_f_worried_low</div>
<div class="a" style="left:1103px;top:500px;width:163px;height:1px;background:#474747"></div>
<div class="a" style="left:1106px;top:488px;width:13px;height:10px;border-right:1px solid #4c4c4c;border-bottom:1px solid #4c4c4c"></div>
<svg class="a" style="left:1136px;top:489px" width="4" height="7"><path d="M0.5 0.5L3.2 3.5L0.5 6.5" fill="none" stroke="#dcdcdc"/></svg>
<svg class="a" style="left:1143px;top:488px" width="11" height="9"><path d="M0.5 1.5H4L5 0.5H6V1.5H10.5V8.5H0.5Z" fill="#e4e4e4"/><rect x="1" y="3" width="9" height="5" fill="#f2f2f2"/></svg>
<div class="t" style="left:1161px;top:489px;font-size:7px;color:#ececec;letter-spacing:-0.1px">player_face_f_worried_talk_left</div>
<div class="a" style="left:1103px;top:515px;width:163px;height:1px;background:#474747"></div>
<div class="a" style="left:1106px;top:503px;width:13px;height:10px;border-right:1px solid #4c4c4c;border-bottom:1px solid #4c4c4c"></div>
<svg class="a" style="left:1136px;top:504px" width="4" height="7"><path d="M0.5 0.5L3.2 3.5L0.5 6.5" fill="none" stroke="#dcdcdc"/></svg>
<svg class="a" style="left:1143px;top:503px" width="11" height="9"><path d="M0.5 1.5H4L5 0.5H6V1.5H10.5V8.5H0.5Z" fill="#e4e4e4"/><rect x="1" y="3" width="9" height="5" fill="#f2f2f2"/></svg>
<div class="t" style="left:1161px;top:504px;font-size:7px;color:#ececec;letter-spacing:-0.1px">player_face_f_worried_left</div>
<div class="a" style="left:1103px;top:530px;width:163px;height:1px;background:#474747"></div>
<div class="a" style="left:1106px;top:518px;width:13px;height:10px;border-right:1px solid #4c4c4c;border-bottom:1px solid #4c4c4c"></div>
<svg class="a" style="left:1136px;top:519px" width="4" height="7"><path d="M0.5 0.5L3.2 3.5L0.5 6.5" fill="none" stroke="#dcdcdc"/></svg>
<svg class="a" style="left:1143px;top:518px" width="11" height="9"><path d="M0.5 1.5H4L5 0.5H6V1.5H10.5V8.5H0.5Z" fill="#e4e4e4"/><rect x="1" y="3" width="9" height="5" fill="#f2f2f2"/></svg>
<div class="t" style="left:1161px;top:519px;font-size:7px;color:#ececec;letter-spacing:-0.1px">player_face_f_worried_talk</div>
<div class="a" style="left:1123px;top:531px;width:143px;height:15px;background:#5f5f5f"></div>
<div class="a" style="left:1103px;top:546px;width:163px;height:1px;background:#474747"></div>
<div class="a" style="left:1106px;top:534px;width:13px;height:10px;border-right:1px solid #4c4c4c;border-bottom:1px solid #4c4c4c"></div>
<svg class="a" style="left:1136px;top:535px" width="4" height="7"><path d="M0.5 0.5L3.2 3.5L0.5 6.5" fill="none" stroke="#dcdcdc"/></svg>
<svg class="a" style="left:1143px;top:534px" width="11" height="9"><path d="M0.5 1.5H4L5 0.5H6V1.5H10.5V8.5H0.5Z" fill="#e4e4e4"/><rect x="1" y="3" width="9" height="5" fill="#f2f2f2"/></svg>
<div class="t" style="left:1161px;top:535px;font-size:7px;color:#ececec;letter-spacing:-0.1px">player_face_f_worried</div>
<div class="a" style="left:1103px;top:561px;width:163px;height:1px;background:#474747"></div>
<svg class="a" style="left:1106px;top:550px" width="12" height="8"><path d="M0.5 4C3 0.5 9 0.5 11.5 4C9 7.5 3 7.5 0.5 4Z" fill="#eeeeee"/><circle cx="6" cy="4" r="2" fill="#535353"/><circle cx="6" cy="4" r="0.9" fill="#eeeeee"/></svg>
<svg class="a" style="left:1136px;top:550px" width="4" height="7"><path d="M0.5 0.5L3.2 3.5L0.5 6.5" fill="none" stroke="#dcdcdc"/></svg>
<svg class="a" style="left:1143px;top:549px" width="11" height="9"><path d="M0.5 1.5H4L5 0.5H6V1.5H10.5V8.5H0.5Z" fill="#e4e4e4"/><rect x="1" y="3" width="9" height="5" fill="#f2f2f2"/></svg>
<div class="t" style="left:1161px;top:550px;font-size:7px;color:#ececec;letter-spacing:-0.1px">player_face_f_normal_talk_hi...</div>
<div class="a" style="left:1103px;top:576px;width:163px;height:1px;background:#474747"></div>
<svg class="a" style="left:1106px;top:565px" width="12" height="8"><path d="M0.5 4C3 0.5 9 0.5 11.5 4C9 7.5 3 7.5 0.5 4Z" fill="#eeeeee"/><circle cx="6" cy="4" r="2" fill="#535353"/><circle cx="6" cy="4" r="0.9" fill="#eeeeee"/></svg>
<svg class="a" style="left:1136px;top:565px" width="4" height="7"><path d="M0.5 0.5L3.2 3.5L0.5 6.5" fill="none" stroke="#dcdcdc"/></svg>
<svg class="a" style="left:1143px;top:564px" width="11" height="9"><path d="M0.5 1.5H4L5 0.5H6V1.5H10.5V8.5H0.5Z" fill="#e4e4e4"/><rect x="1" y="3" width="9" height="5" fill="#f2f2f2"/></svg>
<div class="t" style="left:1161px;top:565px;font-size:7px;color:#ececec;letter-spacing:-0.1px">player_face_f_normal_high</div>
<div class="a" style="left:1103px;top:591px;width:163px;height:1px;background:#474747"></div>
<svg class="a" style="left:1106px;top:580px" width="12" height="8"><path d="M0.5 4C3 0.5 9 0.5 11.5 4C9 7.5 3 7.5 0.5 4Z" fill="#eeeeee"/><circle cx="6" cy="4" r="2" fill="#535353"/><circle cx="6" cy="4" r="0.9" fill="#eeeeee"/></svg>
<svg class="a" style="left:1136px;top:580px" width="4" height="7"><path d="M0.5 0.5L3.2 3.5L0.5 6.5" fill="none" stroke="#dcdcdc"/></svg>
<svg class="a" style="left:1143px;top:579px" width="11" height="9"><path d="M0.5 1.5H4L5 0.5H6V1.5H10.5V8.5H0.5Z" fill="#e4e4e4"/><rect x="1" y="3" width="9" height="5" fill="#f2f2f2"/></svg>
<div class="t" style="left:1161px;top:580px;font-size:7px;color:#ececec;letter-spacing:-0.1px">player_face_f_normal_talk_left</div>
<div class="a" style="left:1103px;top:607px;width:163px;height:1px;background:#474747"></div>
<svg class="a" style="left:1106px;top:596px" width="12" height="8"><path d="M0.5 4C3 0.5 9 0.5 11.5 4C9 7.5 3 7.5 0.5 4Z" fill="#eeeeee"/><circle cx="6" cy="4" r="2" fill="#535353"/><circle cx="6" cy="4" r="0.9" fill="#eeeeee"/></svg>
<svg class="a" style="left:1136px;top:596px" width="4" height="7"><path d="M0.5 0.5L3.2 3.5L0.5 6.5" fill="none" stroke="#dcdcdc"/></svg>
<svg class="a" style="left:1143px;top:595px" width="11" height="9"><path d="M0.5 1.5H4L5 0.5H6V1.5H10.5V8.5H0.5Z" fill="#e4e4e4"/><rect x="1" y="3" width="9" height="5" fill="#f2f2f2"/></svg>
<div class="t" style="left:1161px;top:596px;font-size:7px;color:#ececec;letter-spacing:-0.1px">player_face_f_normal_left</div>
<div class="a" style="left:1103px;top:622px;width:163px;height:1px;background:#474747"></div>
<div class="a" style="left:1106px;top:610px;width:13px;height:10px;border-right:1px solid #4c4c4c;border-bottom:1px solid #4c4c4c"></div>
<svg class="a" style="left:1136px;top:611px" width="4" height="7"><path d="M0.5 0.5L3.2 3.5L0.5 6.5" fill="none" stroke="#dcdcdc"/></svg>
<svg class="a" style="left:1143px;top:610px" width="11" height="9"><path d="M0.5 1.5H4L5 0.5H6V1.5H10.5V8.5H0.5Z" fill="#e4e4e4"/><rect x="1" y="3" width="9" height="5" fill="#f2f2f2"/></svg>
<div class="t" style="left:1161px;top:611px;font-size:7px;color:#ececec;letter-spacing:-0.1px">player_face_f_normal_talk</div>
<div class="a" style="left:1103px;top:637px;width:163px;height:1px;background:#474747"></div>
<svg class="a" style="left:1106px;top:626px" width="12" height="8"><path d="M0.5 4C3 0.5 9 0.5 11.5 4C9 7.5 3 7.5 0.5 4Z" fill="#eeeeee"/><circle cx="6" cy="4" r="2" fill="#535353"/><circle cx="6" cy="4" r="0.9" fill="#eeeeee"/></svg>
<svg class="a" style="left:1136px;top:626px" width="4" height="7"><path d="M0.5 0.5L3.2 3.5L0.5 6.5" fill="none" stroke="#dcdcdc"/></svg>
<svg class="a" style="left:1143px;top:625px" width="11" height="9"><path d="M0.5 1.5H4L5 0.5H6V1.5H10.5V8.5H0.5Z" fill="#e4e4e4"/><rect x="1" y="3" width="9" height="5" fill="#f2f2f2"/></svg>
<div class="t" style="left:1161px;top:626px;font-size:7px;color:#ececec;letter-spacing:-0.1px">player_face_f_normal</div>
<svg class="a" style="left:1106px;top:641px" width="12" height="8"><path d="M0.5 4C3 0.5 9 0.5 11.5 4C9 7.5 3 7.5 0.5 4Z" fill="#eeeeee"/><circle cx="6" cy="4" r="2" fill="#535353"/><circle cx="6" cy="4" r="0.9" fill="#eeeeee"/></svg>
<div class="a" style="left:1103px;top:653px;width:163px;height:1px;background:#474747"></div>
<svg class="a" style="left:1125px;top:641px" width="4" height="7"><path d="M0.5 0.5L3.2 3.5L0.5 6.5" fill="none" stroke="#dcdcdc"/></svg>
<svg class="a" style="left:1132px;top:640px" width="11" height="9"><path d="M0.5 1.5H4L5 0.5H6V1.5H10.5V8.5H0.5Z" fill="#e4e4e4"/><rect x="1" y="3" width="9" height="5" fill="#f2f2f2"/></svg>
<div class="t" style="left:1150px;top:641px;font-size:7px;color:#ececec;letter-spacing:-0.1px">body</div>
<svg class="a" style="left:1106px;top:659px" width="12" height="8"><path d="M0.5 4C3 0.5 9 0.5 11.5 4C9 7.5 3 7.5 0.5 4Z" fill="#eeeeee"/><circle cx="6" cy="4" r="2" fill="#535353"/><circle cx="6" cy="4" r="0.9" fill="#eeeeee"/></svg>
<div class="a" style="left:1126px;top:655px;width:20px;height:17px;background:#f0f0f0"></div>
<div class="t" style="left:1153px;top:659px;font-size:7px;color:#ececec;letter-spacing:-0.1px">bg1</div>
<div class="a" style="left:1103px;top:675px;width:163px;height:1px;background:#474747"></div>
<div class="a" style="left:1266px;top:415px;width:8px;height:262px;background:#535353"></div>
<svg class="a" style="left:1267px;top:422px" width="7" height="4"><path d="M0.5 3.5L3.5 0.5L6.5 3.5" fill="none" stroke="#777"/></svg>
<div class="a" style="left:1267px;top:620px;width:6px;height:48px;background:#666"></div>
<svg class="a" style="left:1267px;top:669px" width="7" height="4"><path d="M0.5 0.5L3.5 3.5L6.5 0.5" fill="none" stroke="#777"/></svg>
<svg class="a" style="left:1140px;top:677px" width="120" height="11">
<rect x="1" y="3" width="9" height="4" rx="2" fill="none" stroke="#9a9a9a"/>
<text x="20" y="9" font-size="9" font-style="italic" fill="#d8d8d8" font-family="Liberation Serif">fx</text>
<rect x="38" y="2" width="9" height="7" fill="#e6e6e6"/><circle cx="42.5" cy="5.5" r="2.2" fill="#535353"/>
<circle cx="59" cy="5.5" r="4" fill="none" stroke="#e6e6e6"/><path d="M59 1.5A4 4 0 0 0 59 9.5Z" fill="#e6e6e6"/>
<path d="M72 2.5H76L77 3.5H82V9.5H72Z" fill="#e6e6e6"/>
<path d="M90.5 1.5H96.5L99.5 4.5V9.5H90.5Z" fill="none" stroke="#e6e6e6"/>
<path d="M108.5 2.5H116.5M110 3.5V10H115V3.5" fill="none" stroke="#e6e6e6"/>
</svg>
<div class="a" style="left:1103px;top:688px;width:172px;height:3px;background:#474747"></div>

<div class="a" style="left:1277px;top:0;width:3px;height:691px;background:#1c1c1c"></div>
<!-- taskbar -->
<div class="a" style="left:0;top:691px;width:1280px;height:29px;background:#050505"></div>
<svg class="a" style="left:0;top:691px" width="1280" height="29">
<!-- windows logo -->
<path d="M10.5 9.2L15.2 8.5V13.7H10.5ZM16 8.4L21.3 7.6V13.7H16ZM10.5 14.5H15.2V19.5L10.5 18.8ZM16 14.5H21.3V20.4L16 19.6Z" fill="#f2f2f2"/>
<!-- task view -->
<path d="M42.5 9.5H48.5V18.5H42.5Z" fill="none" stroke="#eaeaea"/><path d="M50.5 7V20M52.5 7V20" stroke="#eaeaea" stroke-width="0.9"/><path d="M41 7.5H49M41 20.5H49" stroke="#eaeaea" stroke-width="0.9"/>
<!-- chrome -->
<circle cx="81.5" cy="13.5" r="7.5" fill="#db4437"/>
<path d="M81.5 13.5L75 17.25A7.5 7.5 0 0 0 85.25 20L81.5 13.5Z" fill="#0f9d58"/>
<path d="M81.5 13.5L88.85 12A7.5 7.5 0 0 1 85.25 20Z" fill="#f4c20d"/>
<path d="M74 13.5A7.5 7.5 0 0 0 75 17.25L81.5 13.5Z" fill="#0f9d58"/>
<circle cx="81.5" cy="13.5" r="3.3" fill="#fff"/><circle cx="81.5" cy="13.5" r="2.5" fill="#4285f4"/>
<rect x="68.5" y="25.5" width="27.5" height="1.5" fill="#d8d8d8"/>
<!-- discord -->
<path d="M108 8A2 2 0 0 1 110 6H119A2 2 0 0 1 121 8V21L118.5 18.5H110A2 2 0 0 1 108 16.5Z" fill="#7a86cc"/>
<path d="M110.5 11.5C112 10 117 10 118.5 11.5C119.5 13 119 15.5 118 16L116.5 15.2H112.5L111 16C110 15.5 109.5 13 110.5 11.5Z" fill="#fff"/>
<circle cx="112.8" cy="13.2" r="1" fill="#7a86cc"/><circle cx="116.2" cy="13.2" r="1" fill="#7a86cc"/>
<!-- inkscape-ish -->
<path d="M147 5L152 13C154 17 151 20 147 20C143 20 140 17 142 13Z" fill="#9fb4b0"/><path d="M144 15C145 17 149 18 151 15L149 20H144Z" fill="#cfd8d6"/><path d="M146 6L148 6L147 12Z" fill="#444"/>
<!-- OBS -->
<circle cx="179.5" cy="13.5" r="7" fill="#101010" stroke="#e8e8e8" stroke-width="1.2"/>
<path d="M179.5 13.5L176 9.5M179.5 13.5L184.5 12.5M179.5 13.5L178.5 18.5" stroke="#e8e8e8" stroke-width="1.3"/>
<rect x="166" y="25.5" width="27" height="1.5" fill="#d8d8d8"/>
<!-- blue pin -->
<circle cx="212" cy="13.5" r="7.5" fill="#1d5fd1"/>
<circle cx="212" cy="12" r="2.6" fill="#fff"/><path d="M211 13.5H213V18H211Z" fill="#fff"/><circle cx="212" cy="12" r="1" fill="#1d5fd1"/>
<!-- red lightning -->
<rect x="236.5" y="6" width="16" height="15.5" fill="#c51f27"/>
<path d="M246 8L240.5 14.5H244L242.5 19.5L248.5 12.5H245Z" fill="#fff"/>
<!-- pink app -->
<rect x="271" y="8" width="13" height="12" rx="1" fill="#d8797e" transform="rotate(-12 277.5 14)"/>
<rect x="274" y="9.5" width="7" height="9" fill="#e8eef8" transform="rotate(-12 277.5 14)"/>
<path d="M275 11H280M275 14H280M275 17H279" stroke="#4466aa" stroke-width="0.8" transform="rotate(-12 277.5 14)"/>
<!-- steam -->
<circle cx="309.7" cy="13.5" r="7.5" fill="#1b7ab4"/>
<path d="M302 14.5L307 16.5" stroke="#fff" stroke-width="2.2"/><circle cx="312.5" cy="11.5" r="3.3" fill="none" stroke="#fff" stroke-width="1.6"/><circle cx="307.5" cy="16.5" r="1.8" fill="#fff"/>
<!-- lock -->
<circle cx="342.6" cy="13.5" r="7.5" fill="#f4f4f4"/><circle cx="342.6" cy="13.5" r="6" fill="none" stroke="#5a3c86" stroke-width="1"/>
<rect x="339" y="13" width="7" height="5" fill="#5a3c86"/><path d="M340.5 13V11C340.5 8.5 344.5 8.5 344.5 11V13" fill="none" stroke="#5a3c86" stroke-width="1.3"/>
<!-- photoshop active -->
<rect x="359.5" y="0" width="32" height="29" fill="#2e2e2e"/>
<rect x="367" y="6.5" width="16" height="15" fill="#061e26" stroke="#2fb8e0" stroke-width="0.9"/>
<text x="369" y="17.5" font-size="8.5" font-weight="bold" fill="#31c5f0" font-family="Liberation Sans">Ps</text>
<rect x="359.5" y="25.5" width="32" height="1.5" fill="#d8d8d8"/>
<!-- qbittorrent -->
<circle cx="407.3" cy="13.5" r="7.5" fill="#3a78d4"/><circle cx="407.3" cy="13.5" r="6.2" fill="none" stroke="#bcd4f4" stroke-width="0.8"/>
<text x="401.5" y="16.8" font-size="8" font-weight="bold" fill="#fff" font-family="Liberation Sans">qb</text>
<!-- black window -->
<rect x="432" y="8" width="16.5" height="11" fill="#0a0a0a" stroke="#e8e8e8" stroke-width="1"/>
<rect x="426" y="25.5" width="28" height="1.5" fill="#d8d8d8"/>
<!-- tray -->
<path d="M1038 8H1047V13C1047 16 1043 19 1042.5 19C1042 19 1038 16 1038 13Z" fill="#f0f0f0"/><path d="M1042.5 8V19M1038 12.5H1047" stroke="#050505" stroke-width="0.8"/><circle cx="1046" cy="17" r="2.7" fill="#d3132a"/>
<circle cx="1058.3" cy="13" r="5.5" fill="none" stroke="#f0f0f0" stroke-width="1.1"/><path d="M1058.3 13V9M1058.3 13L1061 15" stroke="#f0f0f0"/><circle cx="1055" cy="17" r="2.6" fill="#d3132a"/>
<rect x="1069" y="7.5" width="11" height="11" fill="#5c6b2c"/><path d="M1070 13C1073 9 1077 9 1079 13C1077 16 1073 16 1070 13Z" fill="#86b800" opacity="0.8"/>
<path d="M1085 9C1089 9 1094 13 1095 18M1086 12L1091 17M1085 18H1095" fill="none" stroke="#eee" stroke-width="1"/>
<path d="M1103 8.5H1108V17H1110V20H1103Z" fill="none" stroke="#eee" stroke-width="1"/>
<rect x="1117.5" y="8.5" width="11" height="8" fill="none" stroke="#eee"/><path d="M1120 20H1126M1123 16.5V20" stroke="#eee"/>
<path d="M1134 11H1137L1140 8V19L1137 16H1134Z" fill="none" stroke="#eee"/><path d="M1142 10C1143.5 12 1143.5 15 1142 17M1144 9C1146 11.5 1146 15.5 1144 18" fill="none" stroke="#eee" stroke-width="0.8"/>
<path d="M1152 18L1157 13M1154 19C1152 21 1150 19 1151 17L1153 15M1160 9C1162 7 1164 9 1163 11L1161 13" fill="none" stroke="#eee" stroke-width="1.2"/>
</svg>
<div class="t" style="left:1172px;top:701px;font-size:8px;color:#f0f0f0">ENG</div>
<div class="t" style="left:1202px;top:696px;font-size:8px;color:#f0f0f0">3:59 PM</div>
<div class="t" style="left:1196px;top:707px;font-size:8px;color:#f0f0f0">2019-04-15</div>
<svg class="a" style="left:1247px;top:698px" width="15" height="15"><path d="M1.5 1.5H13.5V10.5H7L4.5 13V10.5H1.5Z" fill="none" stroke="#f0f0f0" stroke-width="1.1"/></svg>
<div class="a" style="left:1273px;top:691px;width:1px;height:29px;background:#555"></div>
</body></html>
